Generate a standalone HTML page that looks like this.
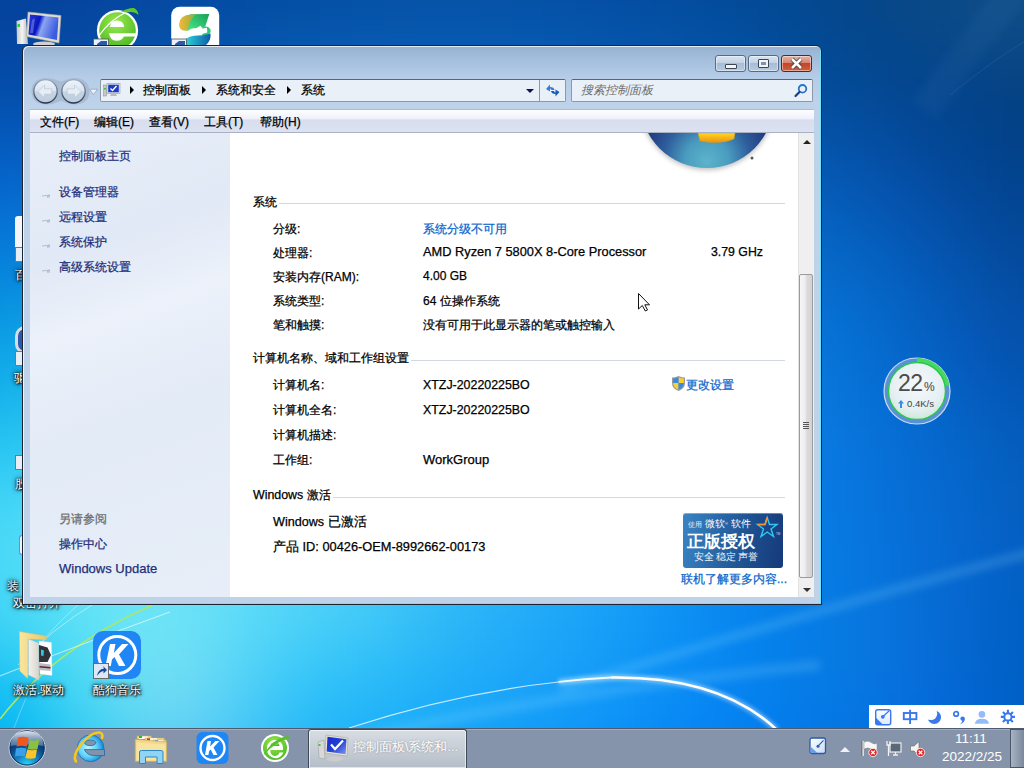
<!DOCTYPE html>
<html><head><meta charset="utf-8">
<style>
*{margin:0;padding:0;box-sizing:border-box}
html,body{width:1024px;height:768px;overflow:hidden}
body{position:relative;font-family:"Liberation Sans",sans-serif;font-size:12px;color:#000;background:#0a56b8}
.a{position:absolute}
.t{position:absolute;white-space:nowrap;line-height:16px}
.s{-webkit-text-stroke:.25px currentColor}
svg{position:absolute;overflow:visible}
.dl{position:absolute;white-space:nowrap;line-height:14px;color:#fff;font-size:12px;text-shadow:0 0 2px #000,1px 1px 2px #000,0 0 4px rgba(0,0,0,.8),0 0 6px rgba(0,0,0,.4)}
#win{left:22px;top:45px;width:800px;height:560px;border:1px solid #1b2430;border-radius:6px 6px 0 0;
background:linear-gradient(180deg,#97b2d1 0px,#a6c0de 16px,#b6cde7 32px,#bed3ea 60px,#bed3ea 100%);box-shadow:inset 1px 1px 0 rgba(255,255,255,.75), inset -1px -1px 0 rgba(100,230,255,.9)}
.tb{top:55px;width:31px;height:17px;border:1px solid #5a6b80;border-radius:3px;background:linear-gradient(180deg,#d9e4f0 0,#c3d3e5 45%,#a7bdd6 50%,#b7cbe1 100%);box-shadow:inset 0 0 0 1px rgba(255,255,255,.45)}
.box{background:#eaf0f8;border:1px solid #8d99a8;border-top-color:#5b6570;border-radius:2px}
#menu{left:30px;top:110px;width:784px;height:23px;background:linear-gradient(180deg,#fdfeff 0,#eef1f9 40%,#d8ddef 45%,#dde2f2 100%);border-bottom:1px solid #a9b1c4;box-shadow:0 -1px 0 #a8bcd4}
#lp{left:30px;top:133px;width:200px;height:464px;background:linear-gradient(160deg,#e8eff9 0%,#e1e9f6 25%,#ecf1fa 40%,#e3ebf7 60%,#e7eef8 100%)}
#ct{left:230px;top:133px;width:568px;height:464px;background:#fff}
#sb{left:798px;top:133px;width:16px;height:464px;background:#efefef;border-left:1px solid #e3e3e3}
.lk{color:#1e2f7a}
.bl{color:#0a66cc}
.hr{position:absolute;height:1px;background:#d4d9df}
#tk{left:0;top:728px;width:1024px;height:40px;background:#8594aa;border-top:1px solid #4d5a70;box-shadow:inset 0 1px 0 rgba(255,255,255,.25)}
</style></head>
<body>
<svg width="1024" height="768" style="left:0;top:0">
<defs>
<linearGradient id="g0" x1="0" y1="0" x2="0" y2="768" gradientUnits="userSpaceOnUse">
<stop offset="0" stop-color="#064ea8"/>
<stop offset="0.4" stop-color="#0658ba"/>
<stop offset="0.8" stop-color="#066ad4"/>
<stop offset="1" stop-color="#0a78e4"/>
</linearGradient>
<radialGradient id="g1">
<stop offset="0" stop-color="#74dcfa" stop-opacity="1"/>
<stop offset="0.3" stop-color="#48c6f4" stop-opacity="0.95"/>
<stop offset="0.65" stop-color="#1ea4ee" stop-opacity="0.6"/>
<stop offset="1" stop-color="#1590e6" stop-opacity="0"/>
</radialGradient>
<filter id="bl2" color-interpolation-filters="sRGB" x="-10%" y="-50%" width="120%" height="200%"><feGaussianBlur stdDeviation="2"/></filter>
<filter id="bl8" color-interpolation-filters="sRGB" x="-20%" y="-100%" width="140%" height="300%"><feGaussianBlur stdDeviation="4"/></filter>
</defs>
<filter id="bgb" color-interpolation-filters="sRGB" filterUnits="userSpaceOnUse" x="-100" y="-100" width="1224" height="968"><feGaussianBlur stdDeviation="18"/></filter>
<g filter="url(#bgb)">
<rect x="-64" y="-64" width="32" height="32" fill="#03419d"/>
<rect x="-32" y="-64" width="32" height="32" fill="#03419d"/>
<rect x="0" y="-64" width="32" height="32" fill="#04419d"/>
<rect x="32" y="-64" width="32" height="32" fill="#05439d"/>
<rect x="64" y="-64" width="32" height="32" fill="#05449e"/>
<rect x="96" y="-64" width="32" height="32" fill="#05459f"/>
<rect x="128" y="-64" width="32" height="32" fill="#0547a0"/>
<rect x="160" y="-64" width="32" height="32" fill="#0448a1"/>
<rect x="192" y="-64" width="32" height="32" fill="#044aa2"/>
<rect x="224" y="-64" width="32" height="32" fill="#044ba3"/>
<rect x="256" y="-64" width="32" height="32" fill="#044da4"/>
<rect x="288" y="-64" width="32" height="32" fill="#044ea5"/>
<rect x="320" y="-64" width="32" height="32" fill="#044fa6"/>
<rect x="352" y="-64" width="32" height="32" fill="#0450a7"/>
<rect x="384" y="-64" width="32" height="32" fill="#0551a7"/>
<rect x="416" y="-64" width="32" height="32" fill="#0551a8"/>
<rect x="448" y="-64" width="32" height="32" fill="#0551a8"/>
<rect x="480" y="-64" width="32" height="32" fill="#0551a7"/>
<rect x="512" y="-64" width="32" height="32" fill="#0550a7"/>
<rect x="544" y="-64" width="32" height="32" fill="#0450a6"/>
<rect x="576" y="-64" width="32" height="32" fill="#044fa4"/>
<rect x="608" y="-64" width="32" height="32" fill="#044ea3"/>
<rect x="640" y="-64" width="32" height="32" fill="#044da0"/>
<rect x="672" y="-64" width="32" height="32" fill="#034c9e"/>
<rect x="704" y="-64" width="32" height="32" fill="#034b9a"/>
<rect x="736" y="-64" width="32" height="32" fill="#044a97"/>
<rect x="768" y="-64" width="32" height="32" fill="#044993"/>
<rect x="800" y="-64" width="32" height="32" fill="#04488f"/>
<rect x="832" y="-64" width="32" height="32" fill="#05478b"/>
<rect x="864" y="-64" width="32" height="32" fill="#074789"/>
<rect x="896" y="-64" width="32" height="32" fill="#094888"/>
<rect x="928" y="-64" width="32" height="32" fill="#0b4a88"/>
<rect x="960" y="-64" width="32" height="32" fill="#0d4c88"/>
<rect x="992" y="-64" width="32" height="32" fill="#0f4d87"/>
<rect x="1024" y="-64" width="32" height="32" fill="#104c86"/>
<rect x="1056" y="-64" width="32" height="32" fill="#104c86"/>
<rect x="-64" y="-32" width="32" height="32" fill="#03419d"/>
<rect x="-32" y="-32" width="32" height="32" fill="#03419d"/>
<rect x="0" y="-32" width="32" height="32" fill="#04419d"/>
<rect x="32" y="-32" width="32" height="32" fill="#05439d"/>
<rect x="64" y="-32" width="32" height="32" fill="#05449e"/>
<rect x="96" y="-32" width="32" height="32" fill="#05459f"/>
<rect x="128" y="-32" width="32" height="32" fill="#0547a0"/>
<rect x="160" y="-32" width="32" height="32" fill="#0448a1"/>
<rect x="192" y="-32" width="32" height="32" fill="#044aa2"/>
<rect x="224" y="-32" width="32" height="32" fill="#044ba3"/>
<rect x="256" y="-32" width="32" height="32" fill="#044da4"/>
<rect x="288" y="-32" width="32" height="32" fill="#044ea5"/>
<rect x="320" y="-32" width="32" height="32" fill="#044fa6"/>
<rect x="352" y="-32" width="32" height="32" fill="#0450a7"/>
<rect x="384" y="-32" width="32" height="32" fill="#0551a7"/>
<rect x="416" y="-32" width="32" height="32" fill="#0551a8"/>
<rect x="448" y="-32" width="32" height="32" fill="#0551a8"/>
<rect x="480" y="-32" width="32" height="32" fill="#0551a7"/>
<rect x="512" y="-32" width="32" height="32" fill="#0550a7"/>
<rect x="544" y="-32" width="32" height="32" fill="#0450a6"/>
<rect x="576" y="-32" width="32" height="32" fill="#044fa4"/>
<rect x="608" y="-32" width="32" height="32" fill="#044ea3"/>
<rect x="640" y="-32" width="32" height="32" fill="#044da0"/>
<rect x="672" y="-32" width="32" height="32" fill="#034c9e"/>
<rect x="704" y="-32" width="32" height="32" fill="#034b9a"/>
<rect x="736" y="-32" width="32" height="32" fill="#044a97"/>
<rect x="768" y="-32" width="32" height="32" fill="#044993"/>
<rect x="800" y="-32" width="32" height="32" fill="#04488f"/>
<rect x="832" y="-32" width="32" height="32" fill="#05478b"/>
<rect x="864" y="-32" width="32" height="32" fill="#074789"/>
<rect x="896" y="-32" width="32" height="32" fill="#094888"/>
<rect x="928" y="-32" width="32" height="32" fill="#0b4a88"/>
<rect x="960" y="-32" width="32" height="32" fill="#0d4c88"/>
<rect x="992" y="-32" width="32" height="32" fill="#0f4d87"/>
<rect x="1024" y="-32" width="32" height="32" fill="#104c86"/>
<rect x="1056" y="-32" width="32" height="32" fill="#104c86"/>
<rect x="-64" y="0" width="32" height="32" fill="#03439f"/>
<rect x="-32" y="0" width="32" height="32" fill="#03439f"/>
<rect x="0" y="0" width="32" height="32" fill="#04449f"/>
<rect x="32" y="0" width="32" height="32" fill="#05459f"/>
<rect x="64" y="0" width="32" height="32" fill="#0546a0"/>
<rect x="96" y="0" width="32" height="32" fill="#0648a2"/>
<rect x="128" y="0" width="32" height="32" fill="#054aa3"/>
<rect x="160" y="0" width="32" height="32" fill="#054ba4"/>
<rect x="192" y="0" width="32" height="32" fill="#054da5"/>
<rect x="224" y="0" width="32" height="32" fill="#044ea6"/>
<rect x="256" y="0" width="32" height="32" fill="#0450a7"/>
<rect x="288" y="0" width="32" height="32" fill="#0551a8"/>
<rect x="320" y="0" width="32" height="32" fill="#0552a9"/>
<rect x="352" y="0" width="32" height="32" fill="#0553aa"/>
<rect x="384" y="0" width="32" height="32" fill="#0654aa"/>
<rect x="416" y="0" width="32" height="32" fill="#0654ab"/>
<rect x="448" y="0" width="32" height="32" fill="#0654ab"/>
<rect x="480" y="0" width="32" height="32" fill="#0654aa"/>
<rect x="512" y="0" width="32" height="32" fill="#0553aa"/>
<rect x="544" y="0" width="32" height="32" fill="#0552a9"/>
<rect x="576" y="0" width="32" height="32" fill="#0551a7"/>
<rect x="608" y="0" width="32" height="32" fill="#0450a6"/>
<rect x="640" y="0" width="32" height="32" fill="#044fa3"/>
<rect x="672" y="0" width="32" height="32" fill="#044ea0"/>
<rect x="704" y="0" width="32" height="32" fill="#034d9d"/>
<rect x="736" y="0" width="32" height="32" fill="#034c99"/>
<rect x="768" y="0" width="32" height="32" fill="#034a95"/>
<rect x="800" y="0" width="32" height="32" fill="#044991"/>
<rect x="832" y="0" width="32" height="32" fill="#05478c"/>
<rect x="864" y="0" width="32" height="32" fill="#06478a"/>
<rect x="896" y="0" width="32" height="32" fill="#084889"/>
<rect x="928" y="0" width="32" height="32" fill="#0a4988"/>
<rect x="960" y="0" width="32" height="32" fill="#0c4b88"/>
<rect x="992" y="0" width="32" height="32" fill="#0e4c87"/>
<rect x="1024" y="0" width="32" height="32" fill="#0f4b86"/>
<rect x="1056" y="0" width="32" height="32" fill="#0f4b86"/>
<rect x="-64" y="32" width="32" height="32" fill="#0347a3"/>
<rect x="-32" y="32" width="32" height="32" fill="#0347a3"/>
<rect x="0" y="32" width="32" height="32" fill="#0447a3"/>
<rect x="32" y="32" width="32" height="32" fill="#0549a4"/>
<rect x="64" y="32" width="32" height="32" fill="#064ba6"/>
<rect x="96" y="32" width="32" height="32" fill="#074da7"/>
<rect x="128" y="32" width="32" height="32" fill="#0750a9"/>
<rect x="160" y="32" width="32" height="32" fill="#0752aa"/>
<rect x="192" y="32" width="32" height="32" fill="#0753ac"/>
<rect x="224" y="32" width="32" height="32" fill="#0755ad"/>
<rect x="256" y="32" width="32" height="32" fill="#0757ae"/>
<rect x="288" y="32" width="32" height="32" fill="#0758af"/>
<rect x="320" y="32" width="32" height="32" fill="#0759af"/>
<rect x="352" y="32" width="32" height="32" fill="#085ab0"/>
<rect x="384" y="32" width="32" height="32" fill="#085ab1"/>
<rect x="416" y="32" width="32" height="32" fill="#085ab1"/>
<rect x="448" y="32" width="32" height="32" fill="#085ab1"/>
<rect x="480" y="32" width="32" height="32" fill="#075ab0"/>
<rect x="512" y="32" width="32" height="32" fill="#0759b0"/>
<rect x="544" y="32" width="32" height="32" fill="#0658af"/>
<rect x="576" y="32" width="32" height="32" fill="#0657ad"/>
<rect x="608" y="32" width="32" height="32" fill="#0555ac"/>
<rect x="640" y="32" width="32" height="32" fill="#0554a9"/>
<rect x="672" y="32" width="32" height="32" fill="#0452a6"/>
<rect x="704" y="32" width="32" height="32" fill="#0450a3"/>
<rect x="736" y="32" width="32" height="32" fill="#034e9f"/>
<rect x="768" y="32" width="32" height="32" fill="#034c9a"/>
<rect x="800" y="32" width="32" height="32" fill="#034a95"/>
<rect x="832" y="32" width="32" height="32" fill="#044890"/>
<rect x="864" y="32" width="32" height="32" fill="#04478c"/>
<rect x="896" y="32" width="32" height="32" fill="#06478b"/>
<rect x="928" y="32" width="32" height="32" fill="#074789"/>
<rect x="960" y="32" width="32" height="32" fill="#094888"/>
<rect x="992" y="32" width="32" height="32" fill="#0a4886"/>
<rect x="1024" y="32" width="32" height="32" fill="#0b4885"/>
<rect x="1056" y="32" width="32" height="32" fill="#0b4885"/>
<rect x="-64" y="64" width="32" height="32" fill="#034ba8"/>
<rect x="-32" y="64" width="32" height="32" fill="#034ba8"/>
<rect x="0" y="64" width="32" height="32" fill="#044ca8"/>
<rect x="32" y="64" width="32" height="32" fill="#064faa"/>
<rect x="64" y="64" width="32" height="32" fill="#0751ac"/>
<rect x="96" y="64" width="32" height="32" fill="#0854ae"/>
<rect x="128" y="64" width="32" height="32" fill="#0956b0"/>
<rect x="160" y="64" width="32" height="32" fill="#0959b1"/>
<rect x="192" y="64" width="32" height="32" fill="#095bb2"/>
<rect x="224" y="64" width="32" height="32" fill="#0a5db3"/>
<rect x="256" y="64" width="32" height="32" fill="#0a5eb4"/>
<rect x="288" y="64" width="32" height="32" fill="#0a5fb5"/>
<rect x="320" y="64" width="32" height="32" fill="#0a60b6"/>
<rect x="352" y="64" width="32" height="32" fill="#0b61b6"/>
<rect x="384" y="64" width="32" height="32" fill="#0b61b7"/>
<rect x="416" y="64" width="32" height="32" fill="#0a61b7"/>
<rect x="448" y="64" width="32" height="32" fill="#0a61b7"/>
<rect x="480" y="64" width="32" height="32" fill="#0a60b7"/>
<rect x="512" y="64" width="32" height="32" fill="#095fb6"/>
<rect x="544" y="64" width="32" height="32" fill="#085eb5"/>
<rect x="576" y="64" width="32" height="32" fill="#075cb4"/>
<rect x="608" y="64" width="32" height="32" fill="#065bb2"/>
<rect x="640" y="64" width="32" height="32" fill="#0659af"/>
<rect x="672" y="64" width="32" height="32" fill="#0557ac"/>
<rect x="704" y="64" width="32" height="32" fill="#0455a9"/>
<rect x="736" y="64" width="32" height="32" fill="#0452a5"/>
<rect x="768" y="64" width="32" height="32" fill="#034fa0"/>
<rect x="800" y="64" width="32" height="32" fill="#034c9b"/>
<rect x="832" y="64" width="32" height="32" fill="#034a95"/>
<rect x="864" y="64" width="32" height="32" fill="#044891"/>
<rect x="896" y="64" width="32" height="32" fill="#04468e"/>
<rect x="928" y="64" width="32" height="32" fill="#05458b"/>
<rect x="960" y="64" width="32" height="32" fill="#054488"/>
<rect x="992" y="64" width="32" height="32" fill="#064485"/>
<rect x="1024" y="64" width="32" height="32" fill="#074484"/>
<rect x="1056" y="64" width="32" height="32" fill="#074484"/>
<rect x="-64" y="96" width="32" height="32" fill="#0352b2"/>
<rect x="-32" y="96" width="32" height="32" fill="#0352b2"/>
<rect x="0" y="96" width="32" height="32" fill="#0453b2"/>
<rect x="32" y="96" width="32" height="32" fill="#0755b3"/>
<rect x="64" y="96" width="32" height="32" fill="#0958b5"/>
<rect x="96" y="96" width="32" height="32" fill="#0a5bb6"/>
<rect x="128" y="96" width="32" height="32" fill="#0b5eb7"/>
<rect x="160" y="96" width="32" height="32" fill="#0c61b8"/>
<rect x="192" y="96" width="32" height="32" fill="#0c63b9"/>
<rect x="224" y="96" width="32" height="32" fill="#0d65ba"/>
<rect x="256" y="96" width="32" height="32" fill="#0d66bb"/>
<rect x="288" y="96" width="32" height="32" fill="#0e68bc"/>
<rect x="320" y="96" width="32" height="32" fill="#0e68bc"/>
<rect x="352" y="96" width="32" height="32" fill="#0e69bd"/>
<rect x="384" y="96" width="32" height="32" fill="#0e69bd"/>
<rect x="416" y="96" width="32" height="32" fill="#0d69bd"/>
<rect x="448" y="96" width="32" height="32" fill="#0d68bd"/>
<rect x="480" y="96" width="32" height="32" fill="#0c67bd"/>
<rect x="512" y="96" width="32" height="32" fill="#0b66bc"/>
<rect x="544" y="96" width="32" height="32" fill="#0a64bb"/>
<rect x="576" y="96" width="32" height="32" fill="#0963ba"/>
<rect x="608" y="96" width="32" height="32" fill="#0861b8"/>
<rect x="640" y="96" width="32" height="32" fill="#075eb6"/>
<rect x="672" y="96" width="32" height="32" fill="#065cb3"/>
<rect x="704" y="96" width="32" height="32" fill="#0559b0"/>
<rect x="736" y="96" width="32" height="32" fill="#0457ac"/>
<rect x="768" y="96" width="32" height="32" fill="#0453a7"/>
<rect x="800" y="96" width="32" height="32" fill="#0450a2"/>
<rect x="832" y="96" width="32" height="32" fill="#044d9e"/>
<rect x="864" y="96" width="32" height="32" fill="#044a99"/>
<rect x="896" y="96" width="32" height="32" fill="#044794"/>
<rect x="928" y="96" width="32" height="32" fill="#03458f"/>
<rect x="960" y="96" width="32" height="32" fill="#03438a"/>
<rect x="992" y="96" width="32" height="32" fill="#034186"/>
<rect x="1024" y="96" width="32" height="32" fill="#044184"/>
<rect x="1056" y="96" width="32" height="32" fill="#044184"/>
<rect x="-64" y="128" width="32" height="32" fill="#045abe"/>
<rect x="-32" y="128" width="32" height="32" fill="#045abe"/>
<rect x="0" y="128" width="32" height="32" fill="#055bbe"/>
<rect x="32" y="128" width="32" height="32" fill="#085dbe"/>
<rect x="64" y="128" width="32" height="32" fill="#0a60be"/>
<rect x="96" y="128" width="32" height="32" fill="#0c64bf"/>
<rect x="128" y="128" width="32" height="32" fill="#0e67bf"/>
<rect x="160" y="128" width="32" height="32" fill="#0f69c0"/>
<rect x="192" y="128" width="32" height="32" fill="#106cc0"/>
<rect x="224" y="128" width="32" height="32" fill="#116ec1"/>
<rect x="256" y="128" width="32" height="32" fill="#116fc2"/>
<rect x="288" y="128" width="32" height="32" fill="#1270c2"/>
<rect x="320" y="128" width="32" height="32" fill="#1271c3"/>
<rect x="352" y="128" width="32" height="32" fill="#1271c3"/>
<rect x="384" y="128" width="32" height="32" fill="#1271c3"/>
<rect x="416" y="128" width="32" height="32" fill="#1170c3"/>
<rect x="448" y="128" width="32" height="32" fill="#1070c3"/>
<rect x="480" y="128" width="32" height="32" fill="#0f6ec3"/>
<rect x="512" y="128" width="32" height="32" fill="#0e6dc3"/>
<rect x="544" y="128" width="32" height="32" fill="#0d6bc2"/>
<rect x="576" y="128" width="32" height="32" fill="#0b69c0"/>
<rect x="608" y="128" width="32" height="32" fill="#0a67bf"/>
<rect x="640" y="128" width="32" height="32" fill="#0864bd"/>
<rect x="672" y="128" width="32" height="32" fill="#0762ba"/>
<rect x="704" y="128" width="32" height="32" fill="#065fb7"/>
<rect x="736" y="128" width="32" height="32" fill="#055cb4"/>
<rect x="768" y="128" width="32" height="32" fill="#0558b0"/>
<rect x="800" y="128" width="32" height="32" fill="#0455ab"/>
<rect x="832" y="128" width="32" height="32" fill="#0451a7"/>
<rect x="864" y="128" width="32" height="32" fill="#044ea2"/>
<rect x="896" y="128" width="32" height="32" fill="#044a9c"/>
<rect x="928" y="128" width="32" height="32" fill="#034795"/>
<rect x="960" y="128" width="32" height="32" fill="#02448f"/>
<rect x="992" y="128" width="32" height="32" fill="#03428a"/>
<rect x="1024" y="128" width="32" height="32" fill="#034188"/>
<rect x="1056" y="128" width="32" height="32" fill="#034188"/>
<rect x="-64" y="160" width="32" height="32" fill="#0462c9"/>
<rect x="-32" y="160" width="32" height="32" fill="#0462c9"/>
<rect x="0" y="160" width="32" height="32" fill="#0664c9"/>
<rect x="32" y="160" width="32" height="32" fill="#0967c9"/>
<rect x="64" y="160" width="32" height="32" fill="#0c6ac8"/>
<rect x="96" y="160" width="32" height="32" fill="#0e6dc7"/>
<rect x="128" y="160" width="32" height="32" fill="#1070c7"/>
<rect x="160" y="160" width="32" height="32" fill="#1273c7"/>
<rect x="192" y="160" width="32" height="32" fill="#1475c8"/>
<rect x="224" y="160" width="32" height="32" fill="#1577c8"/>
<rect x="256" y="160" width="32" height="32" fill="#1678c8"/>
<rect x="288" y="160" width="32" height="32" fill="#1679c9"/>
<rect x="320" y="160" width="32" height="32" fill="#167ac9"/>
<rect x="352" y="160" width="32" height="32" fill="#167ac9"/>
<rect x="384" y="160" width="32" height="32" fill="#1679c9"/>
<rect x="416" y="160" width="32" height="32" fill="#1579ca"/>
<rect x="448" y="160" width="32" height="32" fill="#1477c9"/>
<rect x="480" y="160" width="32" height="32" fill="#1276c9"/>
<rect x="512" y="160" width="32" height="32" fill="#1174c9"/>
<rect x="544" y="160" width="32" height="32" fill="#0f72c8"/>
<rect x="576" y="160" width="32" height="32" fill="#0d70c7"/>
<rect x="608" y="160" width="32" height="32" fill="#0c6dc5"/>
<rect x="640" y="160" width="32" height="32" fill="#0a6bc4"/>
<rect x="672" y="160" width="32" height="32" fill="#0968c1"/>
<rect x="704" y="160" width="32" height="32" fill="#0865bf"/>
<rect x="736" y="160" width="32" height="32" fill="#0661bc"/>
<rect x="768" y="160" width="32" height="32" fill="#065eb8"/>
<rect x="800" y="160" width="32" height="32" fill="#055ab4"/>
<rect x="832" y="160" width="32" height="32" fill="#0556b0"/>
<rect x="864" y="160" width="32" height="32" fill="#0552ab"/>
<rect x="896" y="160" width="32" height="32" fill="#044ea4"/>
<rect x="928" y="160" width="32" height="32" fill="#034a9d"/>
<rect x="960" y="160" width="32" height="32" fill="#034696"/>
<rect x="992" y="160" width="32" height="32" fill="#034490"/>
<rect x="1024" y="160" width="32" height="32" fill="#03438d"/>
<rect x="1056" y="160" width="32" height="32" fill="#03438d"/>
<rect x="-64" y="192" width="32" height="32" fill="#056cd2"/>
<rect x="-32" y="192" width="32" height="32" fill="#056cd2"/>
<rect x="0" y="192" width="32" height="32" fill="#076ed2"/>
<rect x="32" y="192" width="32" height="32" fill="#0a71d1"/>
<rect x="64" y="192" width="32" height="32" fill="#0e74d0"/>
<rect x="96" y="192" width="32" height="32" fill="#1178cf"/>
<rect x="128" y="192" width="32" height="32" fill="#147bcf"/>
<rect x="160" y="192" width="32" height="32" fill="#167dcf"/>
<rect x="192" y="192" width="32" height="32" fill="#187fcf"/>
<rect x="224" y="192" width="32" height="32" fill="#1a81cf"/>
<rect x="256" y="192" width="32" height="32" fill="#1b82cf"/>
<rect x="288" y="192" width="32" height="32" fill="#1b83cf"/>
<rect x="320" y="192" width="32" height="32" fill="#1b83cf"/>
<rect x="352" y="192" width="32" height="32" fill="#1b83cf"/>
<rect x="384" y="192" width="32" height="32" fill="#1a82cf"/>
<rect x="416" y="192" width="32" height="32" fill="#1981cf"/>
<rect x="448" y="192" width="32" height="32" fill="#177fcf"/>
<rect x="480" y="192" width="32" height="32" fill="#167dcf"/>
<rect x="512" y="192" width="32" height="32" fill="#147bcf"/>
<rect x="544" y="192" width="32" height="32" fill="#1279ce"/>
<rect x="576" y="192" width="32" height="32" fill="#1076cd"/>
<rect x="608" y="192" width="32" height="32" fill="#0e74cc"/>
<rect x="640" y="192" width="32" height="32" fill="#0c71ca"/>
<rect x="672" y="192" width="32" height="32" fill="#0a6ec9"/>
<rect x="704" y="192" width="32" height="32" fill="#096bc6"/>
<rect x="736" y="192" width="32" height="32" fill="#0867c4"/>
<rect x="768" y="192" width="32" height="32" fill="#0664c0"/>
<rect x="800" y="192" width="32" height="32" fill="#0660bd"/>
<rect x="832" y="192" width="32" height="32" fill="#055cb8"/>
<rect x="864" y="192" width="32" height="32" fill="#0557b3"/>
<rect x="896" y="192" width="32" height="32" fill="#0452ac"/>
<rect x="928" y="192" width="32" height="32" fill="#044ea4"/>
<rect x="960" y="192" width="32" height="32" fill="#034a9d"/>
<rect x="992" y="192" width="32" height="32" fill="#034696"/>
<rect x="1024" y="192" width="32" height="32" fill="#034593"/>
<rect x="1056" y="192" width="32" height="32" fill="#034593"/>
<rect x="-64" y="224" width="32" height="32" fill="#0578d7"/>
<rect x="-32" y="224" width="32" height="32" fill="#0578d7"/>
<rect x="0" y="224" width="32" height="32" fill="#0779d8"/>
<rect x="32" y="224" width="32" height="32" fill="#0b7dd7"/>
<rect x="64" y="224" width="32" height="32" fill="#1080d7"/>
<rect x="96" y="224" width="32" height="32" fill="#1483d6"/>
<rect x="128" y="224" width="32" height="32" fill="#1786d6"/>
<rect x="160" y="224" width="32" height="32" fill="#1b88d5"/>
<rect x="192" y="224" width="32" height="32" fill="#1d8ad5"/>
<rect x="224" y="224" width="32" height="32" fill="#1f8cd5"/>
<rect x="256" y="224" width="32" height="32" fill="#208cd5"/>
<rect x="288" y="224" width="32" height="32" fill="#218dd5"/>
<rect x="320" y="224" width="32" height="32" fill="#208cd5"/>
<rect x="352" y="224" width="32" height="32" fill="#208cd5"/>
<rect x="384" y="224" width="32" height="32" fill="#1f8bd5"/>
<rect x="416" y="224" width="32" height="32" fill="#1d89d5"/>
<rect x="448" y="224" width="32" height="32" fill="#1b87d5"/>
<rect x="480" y="224" width="32" height="32" fill="#1985d5"/>
<rect x="512" y="224" width="32" height="32" fill="#1783d5"/>
<rect x="544" y="224" width="32" height="32" fill="#1580d4"/>
<rect x="576" y="224" width="32" height="32" fill="#127dd3"/>
<rect x="608" y="224" width="32" height="32" fill="#107ad2"/>
<rect x="640" y="224" width="32" height="32" fill="#0e77d1"/>
<rect x="672" y="224" width="32" height="32" fill="#0c74cf"/>
<rect x="704" y="224" width="32" height="32" fill="#0a70cd"/>
<rect x="736" y="224" width="32" height="32" fill="#086dcb"/>
<rect x="768" y="224" width="32" height="32" fill="#076ac8"/>
<rect x="800" y="224" width="32" height="32" fill="#0666c5"/>
<rect x="832" y="224" width="32" height="32" fill="#0561c0"/>
<rect x="864" y="224" width="32" height="32" fill="#055dba"/>
<rect x="896" y="224" width="32" height="32" fill="#0457b3"/>
<rect x="928" y="224" width="32" height="32" fill="#0452ab"/>
<rect x="960" y="224" width="32" height="32" fill="#044da3"/>
<rect x="992" y="224" width="32" height="32" fill="#04499c"/>
<rect x="1024" y="224" width="32" height="32" fill="#044899"/>
<rect x="1056" y="224" width="32" height="32" fill="#044899"/>
<rect x="-64" y="256" width="32" height="32" fill="#0584dc"/>
<rect x="-32" y="256" width="32" height="32" fill="#0584dc"/>
<rect x="0" y="256" width="32" height="32" fill="#0786dc"/>
<rect x="32" y="256" width="32" height="32" fill="#0d89dd"/>
<rect x="64" y="256" width="32" height="32" fill="#128cdc"/>
<rect x="96" y="256" width="32" height="32" fill="#178fdc"/>
<rect x="128" y="256" width="32" height="32" fill="#1c92dc"/>
<rect x="160" y="256" width="32" height="32" fill="#2094db"/>
<rect x="192" y="256" width="32" height="32" fill="#2395db"/>
<rect x="224" y="256" width="32" height="32" fill="#2596db"/>
<rect x="256" y="256" width="32" height="32" fill="#2697db"/>
<rect x="288" y="256" width="32" height="32" fill="#2697db"/>
<rect x="320" y="256" width="32" height="32" fill="#2696db"/>
<rect x="352" y="256" width="32" height="32" fill="#2595db"/>
<rect x="384" y="256" width="32" height="32" fill="#2493db"/>
<rect x="416" y="256" width="32" height="32" fill="#2291db"/>
<rect x="448" y="256" width="32" height="32" fill="#1f8fdb"/>
<rect x="480" y="256" width="32" height="32" fill="#1d8dda"/>
<rect x="512" y="256" width="32" height="32" fill="#1a8ada"/>
<rect x="544" y="256" width="32" height="32" fill="#1887da"/>
<rect x="576" y="256" width="32" height="32" fill="#1584d9"/>
<rect x="608" y="256" width="32" height="32" fill="#1280d8"/>
<rect x="640" y="256" width="32" height="32" fill="#107dd7"/>
<rect x="672" y="256" width="32" height="32" fill="#0d7ad6"/>
<rect x="704" y="256" width="32" height="32" fill="#0b76d4"/>
<rect x="736" y="256" width="32" height="32" fill="#0973d2"/>
<rect x="768" y="256" width="32" height="32" fill="#086fcf"/>
<rect x="800" y="256" width="32" height="32" fill="#076bcc"/>
<rect x="832" y="256" width="32" height="32" fill="#0667c8"/>
<rect x="864" y="256" width="32" height="32" fill="#0562c2"/>
<rect x="896" y="256" width="32" height="32" fill="#055cba"/>
<rect x="928" y="256" width="32" height="32" fill="#0456b2"/>
<rect x="960" y="256" width="32" height="32" fill="#0451aa"/>
<rect x="992" y="256" width="32" height="32" fill="#044da2"/>
<rect x="1024" y="256" width="32" height="32" fill="#044b9f"/>
<rect x="1056" y="256" width="32" height="32" fill="#044b9f"/>
<rect x="-64" y="288" width="32" height="32" fill="#0791e0"/>
<rect x="-32" y="288" width="32" height="32" fill="#0791e0"/>
<rect x="0" y="288" width="32" height="32" fill="#0993e0"/>
<rect x="32" y="288" width="32" height="32" fill="#1096e1"/>
<rect x="64" y="288" width="32" height="32" fill="#1699e1"/>
<rect x="96" y="288" width="32" height="32" fill="#1c9be1"/>
<rect x="128" y="288" width="32" height="32" fill="#219ee1"/>
<rect x="160" y="288" width="32" height="32" fill="#269fe1"/>
<rect x="192" y="288" width="32" height="32" fill="#29a0e0"/>
<rect x="224" y="288" width="32" height="32" fill="#2ba1e0"/>
<rect x="256" y="288" width="32" height="32" fill="#2ca1e0"/>
<rect x="288" y="288" width="32" height="32" fill="#2ca0e0"/>
<rect x="320" y="288" width="32" height="32" fill="#2c9fe0"/>
<rect x="352" y="288" width="32" height="32" fill="#2a9ee0"/>
<rect x="384" y="288" width="32" height="32" fill="#299ce0"/>
<rect x="416" y="288" width="32" height="32" fill="#2699e0"/>
<rect x="448" y="288" width="32" height="32" fill="#2497e0"/>
<rect x="480" y="288" width="32" height="32" fill="#2194df"/>
<rect x="512" y="288" width="32" height="32" fill="#1d91df"/>
<rect x="544" y="288" width="32" height="32" fill="#1a8ddf"/>
<rect x="576" y="288" width="32" height="32" fill="#178ade"/>
<rect x="608" y="288" width="32" height="32" fill="#1486de"/>
<rect x="640" y="288" width="32" height="32" fill="#1182dd"/>
<rect x="672" y="288" width="32" height="32" fill="#0f7fdb"/>
<rect x="704" y="288" width="32" height="32" fill="#0c7bda"/>
<rect x="736" y="288" width="32" height="32" fill="#0a77d8"/>
<rect x="768" y="288" width="32" height="32" fill="#0874d5"/>
<rect x="800" y="288" width="32" height="32" fill="#0770d2"/>
<rect x="832" y="288" width="32" height="32" fill="#066cce"/>
<rect x="864" y="288" width="32" height="32" fill="#0566c8"/>
<rect x="896" y="288" width="32" height="32" fill="#0560c0"/>
<rect x="928" y="288" width="32" height="32" fill="#055ab8"/>
<rect x="960" y="288" width="32" height="32" fill="#0554b0"/>
<rect x="992" y="288" width="32" height="32" fill="#0550a8"/>
<rect x="1024" y="288" width="32" height="32" fill="#044ea5"/>
<rect x="1056" y="288" width="32" height="32" fill="#044ea5"/>
<rect x="-64" y="320" width="32" height="32" fill="#0a9de4"/>
<rect x="-32" y="320" width="32" height="32" fill="#0a9de4"/>
<rect x="0" y="320" width="32" height="32" fill="#0d9fe5"/>
<rect x="32" y="320" width="32" height="32" fill="#14a2e5"/>
<rect x="64" y="320" width="32" height="32" fill="#1ca5e6"/>
<rect x="96" y="320" width="32" height="32" fill="#22a8e6"/>
<rect x="128" y="320" width="32" height="32" fill="#28a9e6"/>
<rect x="160" y="320" width="32" height="32" fill="#2dabe5"/>
<rect x="192" y="320" width="32" height="32" fill="#30abe5"/>
<rect x="224" y="320" width="32" height="32" fill="#32ace5"/>
<rect x="256" y="320" width="32" height="32" fill="#33abe5"/>
<rect x="288" y="320" width="32" height="32" fill="#33aae4"/>
<rect x="320" y="320" width="32" height="32" fill="#32a8e4"/>
<rect x="352" y="320" width="32" height="32" fill="#30a6e4"/>
<rect x="384" y="320" width="32" height="32" fill="#2ea4e4"/>
<rect x="416" y="320" width="32" height="32" fill="#2ba1e4"/>
<rect x="448" y="320" width="32" height="32" fill="#289ee4"/>
<rect x="480" y="320" width="32" height="32" fill="#249be4"/>
<rect x="512" y="320" width="32" height="32" fill="#2197e4"/>
<rect x="544" y="320" width="32" height="32" fill="#1d93e4"/>
<rect x="576" y="320" width="32" height="32" fill="#198fe3"/>
<rect x="608" y="320" width="32" height="32" fill="#168be2"/>
<rect x="640" y="320" width="32" height="32" fill="#1387e2"/>
<rect x="672" y="320" width="32" height="32" fill="#1083e0"/>
<rect x="704" y="320" width="32" height="32" fill="#0d80df"/>
<rect x="736" y="320" width="32" height="32" fill="#0b7cdd"/>
<rect x="768" y="320" width="32" height="32" fill="#0978da"/>
<rect x="800" y="320" width="32" height="32" fill="#0874d7"/>
<rect x="832" y="320" width="32" height="32" fill="#066fd3"/>
<rect x="864" y="320" width="32" height="32" fill="#066acd"/>
<rect x="896" y="320" width="32" height="32" fill="#0563c6"/>
<rect x="928" y="320" width="32" height="32" fill="#055dbe"/>
<rect x="960" y="320" width="32" height="32" fill="#0557b6"/>
<rect x="992" y="320" width="32" height="32" fill="#0552ae"/>
<rect x="1024" y="320" width="32" height="32" fill="#0450ab"/>
<rect x="1056" y="320" width="32" height="32" fill="#0450ab"/>
<rect x="-64" y="352" width="32" height="32" fill="#0fa9e9"/>
<rect x="-32" y="352" width="32" height="32" fill="#0fa9e9"/>
<rect x="0" y="352" width="32" height="32" fill="#13abe9"/>
<rect x="32" y="352" width="32" height="32" fill="#1baee9"/>
<rect x="64" y="352" width="32" height="32" fill="#23b1ea"/>
<rect x="96" y="352" width="32" height="32" fill="#2ab3ea"/>
<rect x="128" y="352" width="32" height="32" fill="#30b5ea"/>
<rect x="160" y="352" width="32" height="32" fill="#34b6ea"/>
<rect x="192" y="352" width="32" height="32" fill="#38b6e9"/>
<rect x="224" y="352" width="32" height="32" fill="#39b6e9"/>
<rect x="256" y="352" width="32" height="32" fill="#3ab5e9"/>
<rect x="288" y="352" width="32" height="32" fill="#39b3e9"/>
<rect x="320" y="352" width="32" height="32" fill="#38b1e9"/>
<rect x="352" y="352" width="32" height="32" fill="#35afe8"/>
<rect x="384" y="352" width="32" height="32" fill="#32ace8"/>
<rect x="416" y="352" width="32" height="32" fill="#2fa8e8"/>
<rect x="448" y="352" width="32" height="32" fill="#2ba5e8"/>
<rect x="480" y="352" width="32" height="32" fill="#27a1e8"/>
<rect x="512" y="352" width="32" height="32" fill="#239de8"/>
<rect x="544" y="352" width="32" height="32" fill="#1f99e8"/>
<rect x="576" y="352" width="32" height="32" fill="#1b94e7"/>
<rect x="608" y="352" width="32" height="32" fill="#1890e7"/>
<rect x="640" y="352" width="32" height="32" fill="#148ce6"/>
<rect x="672" y="352" width="32" height="32" fill="#1187e5"/>
<rect x="704" y="352" width="32" height="32" fill="#0e83e3"/>
<rect x="736" y="352" width="32" height="32" fill="#0c7fe1"/>
<rect x="768" y="352" width="32" height="32" fill="#0a7bde"/>
<rect x="800" y="352" width="32" height="32" fill="#0876db"/>
<rect x="832" y="352" width="32" height="32" fill="#0771d6"/>
<rect x="864" y="352" width="32" height="32" fill="#066cd1"/>
<rect x="896" y="352" width="32" height="32" fill="#0566ca"/>
<rect x="928" y="352" width="32" height="32" fill="#0560c3"/>
<rect x="960" y="352" width="32" height="32" fill="#055abb"/>
<rect x="992" y="352" width="32" height="32" fill="#0455b4"/>
<rect x="1024" y="352" width="32" height="32" fill="#0453b0"/>
<rect x="1056" y="352" width="32" height="32" fill="#0453b0"/>
<rect x="-64" y="384" width="32" height="32" fill="#16b4ec"/>
<rect x="-32" y="384" width="32" height="32" fill="#16b4ec"/>
<rect x="0" y="384" width="32" height="32" fill="#1ab6ed"/>
<rect x="32" y="384" width="32" height="32" fill="#23baed"/>
<rect x="64" y="384" width="32" height="32" fill="#2cbded"/>
<rect x="96" y="384" width="32" height="32" fill="#33bfee"/>
<rect x="128" y="384" width="32" height="32" fill="#39c0ed"/>
<rect x="160" y="384" width="32" height="32" fill="#3dc1ed"/>
<rect x="192" y="384" width="32" height="32" fill="#40c0ed"/>
<rect x="224" y="384" width="32" height="32" fill="#41bfed"/>
<rect x="256" y="384" width="32" height="32" fill="#41beec"/>
<rect x="288" y="384" width="32" height="32" fill="#40bcec"/>
<rect x="320" y="384" width="32" height="32" fill="#3db9ec"/>
<rect x="352" y="384" width="32" height="32" fill="#3ab6ec"/>
<rect x="384" y="384" width="32" height="32" fill="#37b3ec"/>
<rect x="416" y="384" width="32" height="32" fill="#33afec"/>
<rect x="448" y="384" width="32" height="32" fill="#2fabec"/>
<rect x="480" y="384" width="32" height="32" fill="#2aa6ec"/>
<rect x="512" y="384" width="32" height="32" fill="#26a2ec"/>
<rect x="544" y="384" width="32" height="32" fill="#219deb"/>
<rect x="576" y="384" width="32" height="32" fill="#1d99eb"/>
<rect x="608" y="384" width="32" height="32" fill="#1994ea"/>
<rect x="640" y="384" width="32" height="32" fill="#158fe9"/>
<rect x="672" y="384" width="32" height="32" fill="#128be8"/>
<rect x="704" y="384" width="32" height="32" fill="#0f86e6"/>
<rect x="736" y="384" width="32" height="32" fill="#0c82e4"/>
<rect x="768" y="384" width="32" height="32" fill="#0a7de1"/>
<rect x="800" y="384" width="32" height="32" fill="#0878de"/>
<rect x="832" y="384" width="32" height="32" fill="#0773d9"/>
<rect x="864" y="384" width="32" height="32" fill="#066ed4"/>
<rect x="896" y="384" width="32" height="32" fill="#0669ce"/>
<rect x="928" y="384" width="32" height="32" fill="#0563c7"/>
<rect x="960" y="384" width="32" height="32" fill="#055ec0"/>
<rect x="992" y="384" width="32" height="32" fill="#0459b8"/>
<rect x="1024" y="384" width="32" height="32" fill="#0457b5"/>
<rect x="1056" y="384" width="32" height="32" fill="#0457b5"/>
<rect x="-64" y="416" width="32" height="32" fill="#20bef0"/>
<rect x="-32" y="416" width="32" height="32" fill="#20bef0"/>
<rect x="0" y="416" width="32" height="32" fill="#24c1f0"/>
<rect x="32" y="416" width="32" height="32" fill="#2ec5f1"/>
<rect x="64" y="416" width="32" height="32" fill="#37c8f1"/>
<rect x="96" y="416" width="32" height="32" fill="#3ec9f1"/>
<rect x="128" y="416" width="32" height="32" fill="#43caf1"/>
<rect x="160" y="416" width="32" height="32" fill="#47caf0"/>
<rect x="192" y="416" width="32" height="32" fill="#48c9f0"/>
<rect x="224" y="416" width="32" height="32" fill="#49c8f0"/>
<rect x="256" y="416" width="32" height="32" fill="#48c6f0"/>
<rect x="288" y="416" width="32" height="32" fill="#46c3ef"/>
<rect x="320" y="416" width="32" height="32" fill="#43c0ef"/>
<rect x="352" y="416" width="32" height="32" fill="#3fbdef"/>
<rect x="384" y="416" width="32" height="32" fill="#3bb9ef"/>
<rect x="416" y="416" width="32" height="32" fill="#36b4ef"/>
<rect x="448" y="416" width="32" height="32" fill="#31b0ef"/>
<rect x="480" y="416" width="32" height="32" fill="#2cabef"/>
<rect x="512" y="416" width="32" height="32" fill="#27a6ef"/>
<rect x="544" y="416" width="32" height="32" fill="#23a2ef"/>
<rect x="576" y="416" width="32" height="32" fill="#1e9dee"/>
<rect x="608" y="416" width="32" height="32" fill="#1a98ed"/>
<rect x="640" y="416" width="32" height="32" fill="#1592ec"/>
<rect x="672" y="416" width="32" height="32" fill="#128deb"/>
<rect x="704" y="416" width="32" height="32" fill="#0f88e9"/>
<rect x="736" y="416" width="32" height="32" fill="#0c83e7"/>
<rect x="768" y="416" width="32" height="32" fill="#0a7ee4"/>
<rect x="800" y="416" width="32" height="32" fill="#097ae0"/>
<rect x="832" y="416" width="32" height="32" fill="#0875dc"/>
<rect x="864" y="416" width="32" height="32" fill="#0770d7"/>
<rect x="896" y="416" width="32" height="32" fill="#066bd1"/>
<rect x="928" y="416" width="32" height="32" fill="#0566ca"/>
<rect x="960" y="416" width="32" height="32" fill="#0561c3"/>
<rect x="992" y="416" width="32" height="32" fill="#045dbc"/>
<rect x="1024" y="416" width="32" height="32" fill="#045ab9"/>
<rect x="1056" y="416" width="32" height="32" fill="#045ab9"/>
<rect x="-64" y="448" width="32" height="32" fill="#2dc8f3"/>
<rect x="-32" y="448" width="32" height="32" fill="#2dc8f3"/>
<rect x="0" y="448" width="32" height="32" fill="#32cbf4"/>
<rect x="32" y="448" width="32" height="32" fill="#3bcff4"/>
<rect x="64" y="448" width="32" height="32" fill="#43d1f4"/>
<rect x="96" y="448" width="32" height="32" fill="#49d3f3"/>
<rect x="128" y="448" width="32" height="32" fill="#4ed3f3"/>
<rect x="160" y="448" width="32" height="32" fill="#50d3f3"/>
<rect x="192" y="448" width="32" height="32" fill="#51d1f3"/>
<rect x="224" y="448" width="32" height="32" fill="#50cff2"/>
<rect x="256" y="448" width="32" height="32" fill="#4ecdf2"/>
<rect x="288" y="448" width="32" height="32" fill="#4bcaf2"/>
<rect x="320" y="448" width="32" height="32" fill="#47c6f2"/>
<rect x="352" y="448" width="32" height="32" fill="#43c2f2"/>
<rect x="384" y="448" width="32" height="32" fill="#3ebef2"/>
<rect x="416" y="448" width="32" height="32" fill="#39b9f2"/>
<rect x="448" y="448" width="32" height="32" fill="#33b4f2"/>
<rect x="480" y="448" width="32" height="32" fill="#2eaff2"/>
<rect x="512" y="448" width="32" height="32" fill="#29aaf1"/>
<rect x="544" y="448" width="32" height="32" fill="#23a5f1"/>
<rect x="576" y="448" width="32" height="32" fill="#1e9ff1"/>
<rect x="608" y="448" width="32" height="32" fill="#1a9af0"/>
<rect x="640" y="448" width="32" height="32" fill="#1695ef"/>
<rect x="672" y="448" width="32" height="32" fill="#128fed"/>
<rect x="704" y="448" width="32" height="32" fill="#0f8aeb"/>
<rect x="736" y="448" width="32" height="32" fill="#0c85e9"/>
<rect x="768" y="448" width="32" height="32" fill="#0a80e6"/>
<rect x="800" y="448" width="32" height="32" fill="#097ae2"/>
<rect x="832" y="448" width="32" height="32" fill="#0875de"/>
<rect x="864" y="448" width="32" height="32" fill="#0771d9"/>
<rect x="896" y="448" width="32" height="32" fill="#066cd3"/>
<rect x="928" y="448" width="32" height="32" fill="#0668cd"/>
<rect x="960" y="448" width="32" height="32" fill="#0563c6"/>
<rect x="992" y="448" width="32" height="32" fill="#045fbf"/>
<rect x="1024" y="448" width="32" height="32" fill="#045dbc"/>
<rect x="1056" y="448" width="32" height="32" fill="#045dbc"/>
<rect x="-64" y="480" width="32" height="32" fill="#3bd1f6"/>
<rect x="-32" y="480" width="32" height="32" fill="#3bd1f6"/>
<rect x="0" y="480" width="32" height="32" fill="#40d3f6"/>
<rect x="32" y="480" width="32" height="32" fill="#49d7f6"/>
<rect x="64" y="480" width="32" height="32" fill="#4fd9f6"/>
<rect x="96" y="480" width="32" height="32" fill="#54daf5"/>
<rect x="128" y="480" width="32" height="32" fill="#58dbf5"/>
<rect x="160" y="480" width="32" height="32" fill="#59daf5"/>
<rect x="192" y="480" width="32" height="32" fill="#58d8f5"/>
<rect x="224" y="480" width="32" height="32" fill="#56d5f4"/>
<rect x="256" y="480" width="32" height="32" fill="#53d2f4"/>
<rect x="288" y="480" width="32" height="32" fill="#4fcff4"/>
<rect x="320" y="480" width="32" height="32" fill="#4bcbf4"/>
<rect x="352" y="480" width="32" height="32" fill="#46c6f4"/>
<rect x="384" y="480" width="32" height="32" fill="#40c2f4"/>
<rect x="416" y="480" width="32" height="32" fill="#3abcf4"/>
<rect x="448" y="480" width="32" height="32" fill="#34b7f4"/>
<rect x="480" y="480" width="32" height="32" fill="#2fb2f4"/>
<rect x="512" y="480" width="32" height="32" fill="#29acf4"/>
<rect x="544" y="480" width="32" height="32" fill="#24a7f3"/>
<rect x="576" y="480" width="32" height="32" fill="#1ea2f3"/>
<rect x="608" y="480" width="32" height="32" fill="#1a9cf2"/>
<rect x="640" y="480" width="32" height="32" fill="#1596f1"/>
<rect x="672" y="480" width="32" height="32" fill="#1191ef"/>
<rect x="704" y="480" width="32" height="32" fill="#0e8bed"/>
<rect x="736" y="480" width="32" height="32" fill="#0b86ea"/>
<rect x="768" y="480" width="32" height="32" fill="#0a80e7"/>
<rect x="800" y="480" width="32" height="32" fill="#087be3"/>
<rect x="832" y="480" width="32" height="32" fill="#0876df"/>
<rect x="864" y="480" width="32" height="32" fill="#0772da"/>
<rect x="896" y="480" width="32" height="32" fill="#076dd5"/>
<rect x="928" y="480" width="32" height="32" fill="#0669cf"/>
<rect x="960" y="480" width="32" height="32" fill="#0564c9"/>
<rect x="992" y="480" width="32" height="32" fill="#0560c2"/>
<rect x="1024" y="480" width="32" height="32" fill="#045ebf"/>
<rect x="1056" y="480" width="32" height="32" fill="#045ebf"/>
<rect x="-64" y="512" width="32" height="32" fill="#45d6f7"/>
<rect x="-32" y="512" width="32" height="32" fill="#45d6f7"/>
<rect x="0" y="512" width="32" height="32" fill="#4bd9f8"/>
<rect x="32" y="512" width="32" height="32" fill="#53ddf7"/>
<rect x="64" y="512" width="32" height="32" fill="#59dff7"/>
<rect x="96" y="512" width="32" height="32" fill="#5ee0f7"/>
<rect x="128" y="512" width="32" height="32" fill="#60e0f6"/>
<rect x="160" y="512" width="32" height="32" fill="#60dff6"/>
<rect x="192" y="512" width="32" height="32" fill="#5fddf6"/>
<rect x="224" y="512" width="32" height="32" fill="#5bdaf6"/>
<rect x="256" y="512" width="32" height="32" fill="#57d6f6"/>
<rect x="288" y="512" width="32" height="32" fill="#52d2f6"/>
<rect x="320" y="512" width="32" height="32" fill="#4dcef6"/>
<rect x="352" y="512" width="32" height="32" fill="#47c9f5"/>
<rect x="384" y="512" width="32" height="32" fill="#41c4f5"/>
<rect x="416" y="512" width="32" height="32" fill="#3bbef5"/>
<rect x="448" y="512" width="32" height="32" fill="#34b9f5"/>
<rect x="480" y="512" width="32" height="32" fill="#2eb3f5"/>
<rect x="512" y="512" width="32" height="32" fill="#28aef5"/>
<rect x="544" y="512" width="32" height="32" fill="#23a8f5"/>
<rect x="576" y="512" width="32" height="32" fill="#1ea3f5"/>
<rect x="608" y="512" width="32" height="32" fill="#199df4"/>
<rect x="640" y="512" width="32" height="32" fill="#1497f2"/>
<rect x="672" y="512" width="32" height="32" fill="#1091f1"/>
<rect x="704" y="512" width="32" height="32" fill="#0d8bee"/>
<rect x="736" y="512" width="32" height="32" fill="#0b86eb"/>
<rect x="768" y="512" width="32" height="32" fill="#0981e8"/>
<rect x="800" y="512" width="32" height="32" fill="#087ce4"/>
<rect x="832" y="512" width="32" height="32" fill="#0877e0"/>
<rect x="864" y="512" width="32" height="32" fill="#0772db"/>
<rect x="896" y="512" width="32" height="32" fill="#076ed6"/>
<rect x="928" y="512" width="32" height="32" fill="#0669d1"/>
<rect x="960" y="512" width="32" height="32" fill="#0665cb"/>
<rect x="992" y="512" width="32" height="32" fill="#0560c4"/>
<rect x="1024" y="512" width="32" height="32" fill="#045ec1"/>
<rect x="1056" y="512" width="32" height="32" fill="#045ec1"/>
<rect x="-64" y="544" width="32" height="32" fill="#47d7f7"/>
<rect x="-32" y="544" width="32" height="32" fill="#47d7f7"/>
<rect x="0" y="544" width="32" height="32" fill="#4ddbf7"/>
<rect x="32" y="544" width="32" height="32" fill="#57dff7"/>
<rect x="64" y="544" width="32" height="32" fill="#5fe2f7"/>
<rect x="96" y="544" width="32" height="32" fill="#64e3f7"/>
<rect x="128" y="544" width="32" height="32" fill="#67e3f7"/>
<rect x="160" y="544" width="32" height="32" fill="#66e2f7"/>
<rect x="192" y="544" width="32" height="32" fill="#63dff7"/>
<rect x="224" y="544" width="32" height="32" fill="#5edcf7"/>
<rect x="256" y="544" width="32" height="32" fill="#58d8f7"/>
<rect x="288" y="544" width="32" height="32" fill="#52d4f7"/>
<rect x="320" y="544" width="32" height="32" fill="#4dd0f7"/>
<rect x="352" y="544" width="32" height="32" fill="#47cbf6"/>
<rect x="384" y="544" width="32" height="32" fill="#40c5f6"/>
<rect x="416" y="544" width="32" height="32" fill="#39bff6"/>
<rect x="448" y="544" width="32" height="32" fill="#33b9f6"/>
<rect x="480" y="544" width="32" height="32" fill="#2db3f6"/>
<rect x="512" y="544" width="32" height="32" fill="#27aef6"/>
<rect x="544" y="544" width="32" height="32" fill="#22a9f6"/>
<rect x="576" y="544" width="32" height="32" fill="#1da3f6"/>
<rect x="608" y="544" width="32" height="32" fill="#189df5"/>
<rect x="640" y="544" width="32" height="32" fill="#1397f4"/>
<rect x="672" y="544" width="32" height="32" fill="#0f91f2"/>
<rect x="704" y="544" width="32" height="32" fill="#0c8bef"/>
<rect x="736" y="544" width="32" height="32" fill="#0986ec"/>
<rect x="768" y="544" width="32" height="32" fill="#0881e9"/>
<rect x="800" y="544" width="32" height="32" fill="#077ce5"/>
<rect x="832" y="544" width="32" height="32" fill="#0778e0"/>
<rect x="864" y="544" width="32" height="32" fill="#0773dc"/>
<rect x="896" y="544" width="32" height="32" fill="#076ed7"/>
<rect x="928" y="544" width="32" height="32" fill="#066ad2"/>
<rect x="960" y="544" width="32" height="32" fill="#0565cc"/>
<rect x="992" y="544" width="32" height="32" fill="#0460c6"/>
<rect x="1024" y="544" width="32" height="32" fill="#035fc3"/>
<rect x="1056" y="544" width="32" height="32" fill="#035fc3"/>
<rect x="-64" y="576" width="32" height="32" fill="#43d5f6"/>
<rect x="-32" y="576" width="32" height="32" fill="#43d5f6"/>
<rect x="0" y="576" width="32" height="32" fill="#4ad9f7"/>
<rect x="32" y="576" width="32" height="32" fill="#56def7"/>
<rect x="64" y="576" width="32" height="32" fill="#60e2f7"/>
<rect x="96" y="576" width="32" height="32" fill="#67e4f7"/>
<rect x="128" y="576" width="32" height="32" fill="#6be4f7"/>
<rect x="160" y="576" width="32" height="32" fill="#6ae3f7"/>
<rect x="192" y="576" width="32" height="32" fill="#66e0f7"/>
<rect x="224" y="576" width="32" height="32" fill="#5edcf8"/>
<rect x="256" y="576" width="32" height="32" fill="#57d8f8"/>
<rect x="288" y="576" width="32" height="32" fill="#50d3f8"/>
<rect x="320" y="576" width="32" height="32" fill="#4acff7"/>
<rect x="352" y="576" width="32" height="32" fill="#44caf7"/>
<rect x="384" y="576" width="32" height="32" fill="#3dc4f7"/>
<rect x="416" y="576" width="32" height="32" fill="#36bef7"/>
<rect x="448" y="576" width="32" height="32" fill="#2fb8f7"/>
<rect x="480" y="576" width="32" height="32" fill="#2ab2f7"/>
<rect x="512" y="576" width="32" height="32" fill="#25adf7"/>
<rect x="544" y="576" width="32" height="32" fill="#20a8f7"/>
<rect x="576" y="576" width="32" height="32" fill="#1ba3f7"/>
<rect x="608" y="576" width="32" height="32" fill="#169df6"/>
<rect x="640" y="576" width="32" height="32" fill="#1297f5"/>
<rect x="672" y="576" width="32" height="32" fill="#0e90f3"/>
<rect x="704" y="576" width="32" height="32" fill="#0a8af0"/>
<rect x="736" y="576" width="32" height="32" fill="#0885ed"/>
<rect x="768" y="576" width="32" height="32" fill="#0780e9"/>
<rect x="800" y="576" width="32" height="32" fill="#077ce5"/>
<rect x="832" y="576" width="32" height="32" fill="#0778e1"/>
<rect x="864" y="576" width="32" height="32" fill="#0774dc"/>
<rect x="896" y="576" width="32" height="32" fill="#076fd8"/>
<rect x="928" y="576" width="32" height="32" fill="#066ad2"/>
<rect x="960" y="576" width="32" height="32" fill="#0565cd"/>
<rect x="992" y="576" width="32" height="32" fill="#0361c6"/>
<rect x="1024" y="576" width="32" height="32" fill="#025fc3"/>
<rect x="1056" y="576" width="32" height="32" fill="#025fc3"/>
<rect x="-64" y="608" width="32" height="32" fill="#39d0f5"/>
<rect x="-32" y="608" width="32" height="32" fill="#39d0f5"/>
<rect x="0" y="608" width="32" height="32" fill="#41d4f5"/>
<rect x="32" y="608" width="32" height="32" fill="#4fdbf6"/>
<rect x="64" y="608" width="32" height="32" fill="#5be0f6"/>
<rect x="96" y="608" width="32" height="32" fill="#66e3f6"/>
<rect x="128" y="608" width="32" height="32" fill="#6de3f6"/>
<rect x="160" y="608" width="32" height="32" fill="#6de2f6"/>
<rect x="192" y="608" width="32" height="32" fill="#66dff7"/>
<rect x="224" y="608" width="32" height="32" fill="#5cdaf8"/>
<rect x="256" y="608" width="32" height="32" fill="#52d5f8"/>
<rect x="288" y="608" width="32" height="32" fill="#4ad0f8"/>
<rect x="320" y="608" width="32" height="32" fill="#44ccf8"/>
<rect x="352" y="608" width="32" height="32" fill="#3ec7f8"/>
<rect x="384" y="608" width="32" height="32" fill="#37c1f7"/>
<rect x="416" y="608" width="32" height="32" fill="#30baf7"/>
<rect x="448" y="608" width="32" height="32" fill="#2bb4f7"/>
<rect x="480" y="608" width="32" height="32" fill="#26aff8"/>
<rect x="512" y="608" width="32" height="32" fill="#21aaf8"/>
<rect x="544" y="608" width="32" height="32" fill="#1da6f8"/>
<rect x="576" y="608" width="32" height="32" fill="#19a1f8"/>
<rect x="608" y="608" width="32" height="32" fill="#149bf7"/>
<rect x="640" y="608" width="32" height="32" fill="#1095f5"/>
<rect x="672" y="608" width="32" height="32" fill="#0c8ff3"/>
<rect x="704" y="608" width="32" height="32" fill="#0989f1"/>
<rect x="736" y="608" width="32" height="32" fill="#0684ed"/>
<rect x="768" y="608" width="32" height="32" fill="#0680e9"/>
<rect x="800" y="608" width="32" height="32" fill="#067ce5"/>
<rect x="832" y="608" width="32" height="32" fill="#0779e1"/>
<rect x="864" y="608" width="32" height="32" fill="#0874dd"/>
<rect x="896" y="608" width="32" height="32" fill="#076fd8"/>
<rect x="928" y="608" width="32" height="32" fill="#066ad3"/>
<rect x="960" y="608" width="32" height="32" fill="#0465cd"/>
<rect x="992" y="608" width="32" height="32" fill="#0161c6"/>
<rect x="1024" y="608" width="32" height="32" fill="#005fc3"/>
<rect x="1056" y="608" width="32" height="32" fill="#005fc3"/>
<rect x="-64" y="640" width="32" height="32" fill="#28c8f4"/>
<rect x="-32" y="640" width="32" height="32" fill="#28c8f4"/>
<rect x="0" y="640" width="32" height="32" fill="#30ccf4"/>
<rect x="32" y="640" width="32" height="32" fill="#42d5f5"/>
<rect x="64" y="640" width="32" height="32" fill="#53dbf5"/>
<rect x="96" y="640" width="32" height="32" fill="#63dff5"/>
<rect x="128" y="640" width="32" height="32" fill="#6de0f5"/>
<rect x="160" y="640" width="32" height="32" fill="#6edff5"/>
<rect x="192" y="640" width="32" height="32" fill="#66dbf6"/>
<rect x="224" y="640" width="32" height="32" fill="#58d6f7"/>
<rect x="256" y="640" width="32" height="32" fill="#4bd0f8"/>
<rect x="288" y="640" width="32" height="32" fill="#40cbf8"/>
<rect x="320" y="640" width="32" height="32" fill="#39c6f8"/>
<rect x="352" y="640" width="32" height="32" fill="#34c1f8"/>
<rect x="384" y="640" width="32" height="32" fill="#2fbbf8"/>
<rect x="416" y="640" width="32" height="32" fill="#29b6f8"/>
<rect x="448" y="640" width="32" height="32" fill="#25b0f8"/>
<rect x="480" y="640" width="32" height="32" fill="#21abf8"/>
<rect x="512" y="640" width="32" height="32" fill="#1ea7f8"/>
<rect x="544" y="640" width="32" height="32" fill="#1aa3f8"/>
<rect x="576" y="640" width="32" height="32" fill="#169ef8"/>
<rect x="608" y="640" width="32" height="32" fill="#1299f7"/>
<rect x="640" y="640" width="32" height="32" fill="#0e93f6"/>
<rect x="672" y="640" width="32" height="32" fill="#0b8df4"/>
<rect x="704" y="640" width="32" height="32" fill="#0888f1"/>
<rect x="736" y="640" width="32" height="32" fill="#0683ee"/>
<rect x="768" y="640" width="32" height="32" fill="#057fea"/>
<rect x="800" y="640" width="32" height="32" fill="#067ce5"/>
<rect x="832" y="640" width="32" height="32" fill="#0779e1"/>
<rect x="864" y="640" width="32" height="32" fill="#0874dd"/>
<rect x="896" y="640" width="32" height="32" fill="#076fda"/>
<rect x="928" y="640" width="32" height="32" fill="#066ad4"/>
<rect x="960" y="640" width="32" height="32" fill="#0365cd"/>
<rect x="992" y="640" width="32" height="32" fill="#0061c6"/>
<rect x="1024" y="640" width="32" height="32" fill="#005fc3"/>
<rect x="1056" y="640" width="32" height="32" fill="#005fc3"/>
<rect x="-64" y="672" width="32" height="32" fill="#15bef4"/>
<rect x="-32" y="672" width="32" height="32" fill="#15bef4"/>
<rect x="0" y="672" width="32" height="32" fill="#1ec3f4"/>
<rect x="32" y="672" width="32" height="32" fill="#32cef4"/>
<rect x="64" y="672" width="32" height="32" fill="#48d6f4"/>
<rect x="96" y="672" width="32" height="32" fill="#5cdbf4"/>
<rect x="128" y="672" width="32" height="32" fill="#6adcf4"/>
<rect x="160" y="672" width="32" height="32" fill="#6edbf4"/>
<rect x="192" y="672" width="32" height="32" fill="#64d6f5"/>
<rect x="224" y="672" width="32" height="32" fill="#53d0f7"/>
<rect x="256" y="672" width="32" height="32" fill="#42caf7"/>
<rect x="288" y="672" width="32" height="32" fill="#35c3f8"/>
<rect x="320" y="672" width="32" height="32" fill="#2ebff8"/>
<rect x="352" y="672" width="32" height="32" fill="#2abaf8"/>
<rect x="384" y="672" width="32" height="32" fill="#26b6f8"/>
<rect x="416" y="672" width="32" height="32" fill="#22b0f8"/>
<rect x="448" y="672" width="32" height="32" fill="#1facf8"/>
<rect x="480" y="672" width="32" height="32" fill="#1da7f8"/>
<rect x="512" y="672" width="32" height="32" fill="#1aa3f8"/>
<rect x="544" y="672" width="32" height="32" fill="#179ff8"/>
<rect x="576" y="672" width="32" height="32" fill="#139af8"/>
<rect x="608" y="672" width="32" height="32" fill="#1095f7"/>
<rect x="640" y="672" width="32" height="32" fill="#0c90f6"/>
<rect x="672" y="672" width="32" height="32" fill="#098bf4"/>
<rect x="704" y="672" width="32" height="32" fill="#0786f2"/>
<rect x="736" y="672" width="32" height="32" fill="#0582ee"/>
<rect x="768" y="672" width="32" height="32" fill="#057eea"/>
<rect x="800" y="672" width="32" height="32" fill="#067be6"/>
<rect x="832" y="672" width="32" height="32" fill="#0778e2"/>
<rect x="864" y="672" width="32" height="32" fill="#0773df"/>
<rect x="896" y="672" width="32" height="32" fill="#076edb"/>
<rect x="928" y="672" width="32" height="32" fill="#0569d6"/>
<rect x="960" y="672" width="32" height="32" fill="#0264cf"/>
<rect x="992" y="672" width="32" height="32" fill="#0061c8"/>
<rect x="1024" y="672" width="32" height="32" fill="#005fc5"/>
<rect x="1056" y="672" width="32" height="32" fill="#005fc5"/>
<rect x="-64" y="704" width="32" height="32" fill="#06b7f3"/>
<rect x="-32" y="704" width="32" height="32" fill="#06b7f3"/>
<rect x="0" y="704" width="32" height="32" fill="#0fbbf3"/>
<rect x="32" y="704" width="32" height="32" fill="#25c6f3"/>
<rect x="64" y="704" width="32" height="32" fill="#3ccff3"/>
<rect x="96" y="704" width="32" height="32" fill="#51d4f3"/>
<rect x="128" y="704" width="32" height="32" fill="#62d6f3"/>
<rect x="160" y="704" width="32" height="32" fill="#66d4f4"/>
<rect x="192" y="704" width="32" height="32" fill="#5cd0f5"/>
<rect x="224" y="704" width="32" height="32" fill="#4ccaf6"/>
<rect x="256" y="704" width="32" height="32" fill="#3ac3f7"/>
<rect x="288" y="704" width="32" height="32" fill="#2cbdf7"/>
<rect x="320" y="704" width="32" height="32" fill="#25b8f8"/>
<rect x="352" y="704" width="32" height="32" fill="#21b4f8"/>
<rect x="384" y="704" width="32" height="32" fill="#1eb0f8"/>
<rect x="416" y="704" width="32" height="32" fill="#1cabf8"/>
<rect x="448" y="704" width="32" height="32" fill="#1aa7f8"/>
<rect x="480" y="704" width="32" height="32" fill="#18a2f8"/>
<rect x="512" y="704" width="32" height="32" fill="#159ef8"/>
<rect x="544" y="704" width="32" height="32" fill="#139bf8"/>
<rect x="576" y="704" width="32" height="32" fill="#1097f8"/>
<rect x="608" y="704" width="32" height="32" fill="#0d92f7"/>
<rect x="640" y="704" width="32" height="32" fill="#0a8df6"/>
<rect x="672" y="704" width="32" height="32" fill="#0888f4"/>
<rect x="704" y="704" width="32" height="32" fill="#0684f2"/>
<rect x="736" y="704" width="32" height="32" fill="#0580ef"/>
<rect x="768" y="704" width="32" height="32" fill="#047deb"/>
<rect x="800" y="704" width="32" height="32" fill="#0579e7"/>
<rect x="832" y="704" width="32" height="32" fill="#0576e3"/>
<rect x="864" y="704" width="32" height="32" fill="#0572e0"/>
<rect x="896" y="704" width="32" height="32" fill="#056ddc"/>
<rect x="928" y="704" width="32" height="32" fill="#0368d7"/>
<rect x="960" y="704" width="32" height="32" fill="#0164d0"/>
<rect x="992" y="704" width="32" height="32" fill="#0060ca"/>
<rect x="1024" y="704" width="32" height="32" fill="#005fc7"/>
<rect x="1056" y="704" width="32" height="32" fill="#005fc7"/>
<rect x="-64" y="736" width="32" height="32" fill="#00b2f4"/>
<rect x="-32" y="736" width="32" height="32" fill="#00b2f4"/>
<rect x="0" y="736" width="32" height="32" fill="#06b6f3"/>
<rect x="32" y="736" width="32" height="32" fill="#1abff3"/>
<rect x="64" y="736" width="32" height="32" fill="#30c7f3"/>
<rect x="96" y="736" width="32" height="32" fill="#43ccf3"/>
<rect x="128" y="736" width="32" height="32" fill="#52cdf3"/>
<rect x="160" y="736" width="32" height="32" fill="#56ccf3"/>
<rect x="192" y="736" width="32" height="32" fill="#50c9f4"/>
<rect x="224" y="736" width="32" height="32" fill="#43c3f5"/>
<rect x="256" y="736" width="32" height="32" fill="#34bdf6"/>
<rect x="288" y="736" width="32" height="32" fill="#27b7f7"/>
<rect x="320" y="736" width="32" height="32" fill="#1fb3f7"/>
<rect x="352" y="736" width="32" height="32" fill="#1baff8"/>
<rect x="384" y="736" width="32" height="32" fill="#18abf8"/>
<rect x="416" y="736" width="32" height="32" fill="#16a6f8"/>
<rect x="448" y="736" width="32" height="32" fill="#14a2f8"/>
<rect x="480" y="736" width="32" height="32" fill="#139ef8"/>
<rect x="512" y="736" width="32" height="32" fill="#119bf8"/>
<rect x="544" y="736" width="32" height="32" fill="#0f97f8"/>
<rect x="576" y="736" width="32" height="32" fill="#0c93f7"/>
<rect x="608" y="736" width="32" height="32" fill="#0a8ff7"/>
<rect x="640" y="736" width="32" height="32" fill="#088af6"/>
<rect x="672" y="736" width="32" height="32" fill="#0686f4"/>
<rect x="704" y="736" width="32" height="32" fill="#0482f2"/>
<rect x="736" y="736" width="32" height="32" fill="#037eef"/>
<rect x="768" y="736" width="32" height="32" fill="#037bec"/>
<rect x="800" y="736" width="32" height="32" fill="#0378e8"/>
<rect x="832" y="736" width="32" height="32" fill="#0374e4"/>
<rect x="864" y="736" width="32" height="32" fill="#0370e1"/>
<rect x="896" y="736" width="32" height="32" fill="#036cdd"/>
<rect x="928" y="736" width="32" height="32" fill="#0167d8"/>
<rect x="960" y="736" width="32" height="32" fill="#0063d2"/>
<rect x="992" y="736" width="32" height="32" fill="#0060cc"/>
<rect x="1024" y="736" width="32" height="32" fill="#005ec9"/>
<rect x="1056" y="736" width="32" height="32" fill="#005ec9"/>
<rect x="-64" y="768" width="32" height="32" fill="#00b0f4"/>
<rect x="-32" y="768" width="32" height="32" fill="#00b0f4"/>
<rect x="0" y="768" width="32" height="32" fill="#03b4f4"/>
<rect x="32" y="768" width="32" height="32" fill="#16bcf3"/>
<rect x="64" y="768" width="32" height="32" fill="#2ac3f3"/>
<rect x="96" y="768" width="32" height="32" fill="#3cc8f3"/>
<rect x="128" y="768" width="32" height="32" fill="#4acaf3"/>
<rect x="160" y="768" width="32" height="32" fill="#4ec9f4"/>
<rect x="192" y="768" width="32" height="32" fill="#49c5f4"/>
<rect x="224" y="768" width="32" height="32" fill="#3ec0f5"/>
<rect x="256" y="768" width="32" height="32" fill="#30bbf6"/>
<rect x="288" y="768" width="32" height="32" fill="#25b5f7"/>
<rect x="320" y="768" width="32" height="32" fill="#1db1f7"/>
<rect x="352" y="768" width="32" height="32" fill="#19acf8"/>
<rect x="384" y="768" width="32" height="32" fill="#16a8f8"/>
<rect x="416" y="768" width="32" height="32" fill="#14a4f8"/>
<rect x="448" y="768" width="32" height="32" fill="#12a0f8"/>
<rect x="480" y="768" width="32" height="32" fill="#109cf8"/>
<rect x="512" y="768" width="32" height="32" fill="#0f99f8"/>
<rect x="544" y="768" width="32" height="32" fill="#0d95f8"/>
<rect x="576" y="768" width="32" height="32" fill="#0a91f7"/>
<rect x="608" y="768" width="32" height="32" fill="#088df7"/>
<rect x="640" y="768" width="32" height="32" fill="#0689f6"/>
<rect x="672" y="768" width="32" height="32" fill="#0585f4"/>
<rect x="704" y="768" width="32" height="32" fill="#0381f2"/>
<rect x="736" y="768" width="32" height="32" fill="#027eef"/>
<rect x="768" y="768" width="32" height="32" fill="#027aec"/>
<rect x="800" y="768" width="32" height="32" fill="#0277e8"/>
<rect x="832" y="768" width="32" height="32" fill="#0273e5"/>
<rect x="864" y="768" width="32" height="32" fill="#026fe1"/>
<rect x="896" y="768" width="32" height="32" fill="#016bdd"/>
<rect x="928" y="768" width="32" height="32" fill="#0067d8"/>
<rect x="960" y="768" width="32" height="32" fill="#0063d2"/>
<rect x="992" y="768" width="32" height="32" fill="#0060cc"/>
<rect x="1024" y="768" width="32" height="32" fill="#005eca"/>
<rect x="1056" y="768" width="32" height="32" fill="#005eca"/>
<rect x="-64" y="800" width="32" height="32" fill="#00b0f4"/>
<rect x="-32" y="800" width="32" height="32" fill="#00b0f4"/>
<rect x="0" y="800" width="32" height="32" fill="#03b4f4"/>
<rect x="32" y="800" width="32" height="32" fill="#16bcf3"/>
<rect x="64" y="800" width="32" height="32" fill="#2ac3f3"/>
<rect x="96" y="800" width="32" height="32" fill="#3cc8f3"/>
<rect x="128" y="800" width="32" height="32" fill="#4acaf3"/>
<rect x="160" y="800" width="32" height="32" fill="#4ec9f4"/>
<rect x="192" y="800" width="32" height="32" fill="#49c5f4"/>
<rect x="224" y="800" width="32" height="32" fill="#3ec0f5"/>
<rect x="256" y="800" width="32" height="32" fill="#30bbf6"/>
<rect x="288" y="800" width="32" height="32" fill="#25b5f7"/>
<rect x="320" y="800" width="32" height="32" fill="#1db1f7"/>
<rect x="352" y="800" width="32" height="32" fill="#19acf8"/>
<rect x="384" y="800" width="32" height="32" fill="#16a8f8"/>
<rect x="416" y="800" width="32" height="32" fill="#14a4f8"/>
<rect x="448" y="800" width="32" height="32" fill="#12a0f8"/>
<rect x="480" y="800" width="32" height="32" fill="#109cf8"/>
<rect x="512" y="800" width="32" height="32" fill="#0f99f8"/>
<rect x="544" y="800" width="32" height="32" fill="#0d95f8"/>
<rect x="576" y="800" width="32" height="32" fill="#0a91f7"/>
<rect x="608" y="800" width="32" height="32" fill="#088df7"/>
<rect x="640" y="800" width="32" height="32" fill="#0689f6"/>
<rect x="672" y="800" width="32" height="32" fill="#0585f4"/>
<rect x="704" y="800" width="32" height="32" fill="#0381f2"/>
<rect x="736" y="800" width="32" height="32" fill="#027eef"/>
<rect x="768" y="800" width="32" height="32" fill="#027aec"/>
<rect x="800" y="800" width="32" height="32" fill="#0277e8"/>
<rect x="832" y="800" width="32" height="32" fill="#0273e5"/>
<rect x="864" y="800" width="32" height="32" fill="#026fe1"/>
<rect x="896" y="800" width="32" height="32" fill="#016bdd"/>
<rect x="928" y="800" width="32" height="32" fill="#0067d8"/>
<rect x="960" y="800" width="32" height="32" fill="#0063d2"/>
<rect x="992" y="800" width="32" height="32" fill="#0060cc"/>
<rect x="1024" y="800" width="32" height="32" fill="#005eca"/>
<rect x="1056" y="800" width="32" height="32" fill="#005eca"/>
</g>
<path d="M1015 -10 Q975 40 925 110" stroke="#7aa8e0" stroke-width="30" fill="none" opacity=".06" filter="url(#bl8)"/>
<path d="M1030 38 Q990 62 950 95" stroke="#a8d0f4" stroke-width="1" fill="none" opacity=".1"/>
<path d="M560 690 Q830 605 1060 545" stroke="#9ee4ff" stroke-width="8" fill="none" opacity=".22" filter="url(#bl8)"/>

<path d="M330 745 Q 560 690 820 665" stroke="#a8e8ff" stroke-width="10" fill="none" opacity=".18" filter="url(#bl8)"/>
<path d="M349 728 Q 480 685 611 677.5" stroke="#fff" stroke-width="1.2" fill="none" opacity=".75"/>
<path d="M558.6 681.9 Q584.8 679 611 677.5 Q 720 676 777 730" stroke="#fff" stroke-width="5" fill="none" opacity=".5" filter="url(#bl2)"/>
<path d="M611 677.5 Q 720 676 777 730" stroke="#fff" stroke-width="2.6" fill="none"/>
<path d="M558.6 681.9 Q584.8 679 611 677.5" stroke="#fff" stroke-width="1.8" fill="none" opacity=".8"/>
<path d="M0 719 Q62 640 170 598" stroke="#a8e868" stroke-width="1.7" fill="none"/>
<path d="M0 676 Q60 652 170 612" stroke="#fff" stroke-width="1.2" fill="none" opacity=".55"/>
<path d="M18 665 Q50 630 95 603" stroke="#fff" stroke-width="1" fill="none" opacity=".45"/>
<path d="M35 650 Q55 625 78 605" stroke="#fff" stroke-width="1" fill="none" opacity=".35"/>
<path d="M14 728 Q20 712 26 698" stroke="#fff" stroke-width="1" fill="none" opacity=".3"/>
</svg>
<!-- computer icon -->
<svg width="70" height="50" style="left:0;top:0">
<defs>
<linearGradient id="scr" x1="0" y1="0" x2="1" y2="0.3"><stop offset="0" stop-color="#2838d8"/><stop offset=".4" stop-color="#0818c0"/><stop offset=".55" stop-color="#8ca4f4"/><stop offset="1" stop-color="#3c5ce0"/></linearGradient>
<linearGradient id="twr" x1="0" y1="0" x2="1" y2="0"><stop offset="0" stop-color="#c8c8c8"/><stop offset=".5" stop-color="#f4f4f4"/><stop offset="1" stop-color="#b8b8b8"/></linearGradient>
</defs>
<path d="M16.5 21 L26 18.5 L28 44 L17 44 Z" fill="url(#twr)"/>
<rect x="17.5" y="24" width="2.5" height="3" fill="#30d030"/>
<ellipse cx="44" cy="44" rx="11" ry="2.5" fill="#d0d0d0"/>
<path d="M28 12 L61 15.5 L59 43 L26.5 36.5 Z" fill="#dedbd0" stroke="#a8a8a0" stroke-width=".6"/>
<path d="M30 14.5 L58.5 17.5 L57 40 L28.5 34.5 Z" fill="url(#scr)"/>
<path d="M32 20 L35 18 L33 33 L30 33 Z" fill="#fff" opacity=".25"/>
</svg>
<!-- 360 browser icon -->
<svg width="60" height="50" style="left:88px;top:0">
<defs><radialGradient id="g360" cx=".45" cy=".3" r=".75"><stop offset="0" stop-color="#9ce850"/><stop offset="1" stop-color="#48b820"/></radialGradient></defs>
<circle cx="29.5" cy="30.5" r="20.6" fill="#fff"/>
<circle cx="29.5" cy="30.5" r="18.3" fill="url(#g360)"/>
<path d="M21.9 27.1 Q22.5 20.4 29 20.4 Q35.5 20.4 36.2 27.1 Z" fill="#fff"/>
<path d="M21.1 33.2 L47.6 33.2 L47.6 36.5 L36 36.5 Q34 40.7 28.5 40.7 Q22 40.5 21.1 33.2 Z" fill="#fff"/>
<path d="M11 35.7 Q22 20 37.7 12.5" stroke="#fff" stroke-width="1.3" fill="none"/>
<path d="M33 11.5 Q41 7.5 46 8 Q50 10 50.5 15 Q46 10.5 38 12.5 Z" fill="#5cc828"/>
<rect x="5.5" y="39" width="15" height="9" fill="#e8f0fa" stroke="#555" stroke-width=".8"/>
<path d="M9 44 L13 41 L19 41 L19 48 L9 48 Z" fill="#2a5aa8"/>
</svg>
<!-- S app icon -->
<svg width="60" height="50" style="left:165px;top:0">
<defs>
<linearGradient id="sy" x1="0" y1="0" x2="1" y2="0"><stop offset="0" stop-color="#f4b838"/><stop offset="1" stop-color="#8cb040"/></linearGradient>
<linearGradient id="sg" x1="0" y1="1" x2="1" y2="0"><stop offset="0" stop-color="#48e888"/><stop offset="1" stop-color="#18a058"/></linearGradient>
<linearGradient id="st" x1="0" y1="0" x2="1" y2="0"><stop offset="0" stop-color="#30e8e0"/><stop offset="1" stop-color="#1058a8"/></linearGradient>
</defs>
<rect x="6.2" y="6.8" width="48" height="48" rx="8.5" fill="#fff"/>
<path d="M25 14.3 L44.3 14 L40.3 26.5 L32 29 L23 31 Q21 21 25 14.3 Z" fill="url(#sg)"/>
<ellipse cx="40.5" cy="31" rx="5.2" ry="4.6" fill="#2cc878"/>
<path d="M14 24.5 Q14.5 15 26 14.6 L30.8 14.2 Q24 20 22.8 30.8 Q14 31.5 14 24.5 Z" fill="url(#sy)"/>
<path d="M22.5 31.5 Q25.5 27.5 31 28.3 L35.5 25.8 L37.5 28.5 L42 27.8 L42.3 32.5 L38 33.8 Q33 37 28 36.3 Q23 35.5 22.5 31.5 Z" fill="#fff"/>
<path d="M16.5 46 Q19.5 36.5 29 35.8 L37.5 35.2 Q43.5 34.5 45.5 33.5 Q46.5 41 40 46 Z" fill="url(#st)"/>
<rect x="6.5" y="39" width="15" height="9" fill="#e8f0fa" stroke="#555" stroke-width=".8"/>
<path d="M10 44 L14 41 L20 41 L20 48 L10 48 Z" fill="#2a5aa8"/>
</svg>
<!-- partially hidden left icons -->
<div class="a" style="left:15px;top:216px;width:8px;height:31px;background:#f4f6f8;border-radius:3px 0 0 0"></div>
<div class="a" style="left:15px;top:247px;width:8px;height:15px;background:#e8eef6;border:1px solid #777;border-right:0"></div>
<div class="dl" style="left:15px;top:268px">百</div>
<div class="a" style="left:15px;top:326px;width:10px;height:28px;border:3px solid #d8dcdf;border-right:0;border-radius:14px 0 0 14px;background:#2a5ab0"></div>
<div class="a" style="left:15px;top:351px;width:8px;height:15px;background:#e8eef6;border:1px solid #777;border-right:0"></div>
<div class="dl" style="left:14px;top:371px">驱</div>
<div class="a" style="left:15px;top:455px;width:8px;height:15px;background:#e8eef6;border:1px solid #777;border-right:0"></div>
<div class="dl" style="left:15px;top:477px">股</div>
<div class="a" style="left:19px;top:535px;width:4px;height:20px;background:#eef2f6;border:1px solid #6a8ae8;border-right:0;border-radius:3px 0 0 3px"></div>
<div class="dl" style="left:7px;top:579px">装</div>
<div class="dl" style="left:13px;top:596px">双击打开</div>
<!-- folder icon -->
<svg width="60" height="60" style="left:10px;top:625px">
<defs><linearGradient id="fy" x1="0" y1="0" x2="1" y2="0"><stop offset="0" stop-color="#fae6a0"/><stop offset="1" stop-color="#e8c868"/></linearGradient>
<linearGradient id="fp" x1="0" y1="0" x2="1" y2="0"><stop offset="0" stop-color="#f4f2ee"/><stop offset="1" stop-color="#d8d4cc"/></linearGradient></defs>
<path d="M9.4 6.5 L36 11 L36.5 15 L18 14 L18 50 L17.5 53.5 L9.8 46 Z" fill="url(#fy)" stroke="#d8b860" stroke-width=".5"/>
<path d="M29 16 L41.5 17.5 L42 50.5 L30 49 Z" fill="#fff" stroke="#ddd" stroke-width=".4"/>
<path d="M29 20 L37.5 22.5 L41 30 L37.5 37 L29 37 Z" fill="#303438"/>
<path d="M31 24.5 L34 25.5 L33.5 31 L31 30.5 Z" fill="#30c8e0"/>
<path d="M29.5 38 L40.5 39.5 L40.5 46 L29.5 45 Z" fill="#b8bcc4"/>
<path d="M29.5 41 L40.5 42 L40.5 43.5 L29.5 42.5 Z" fill="#702020"/>
<path d="M18.5 14 L28.5 18 L29 55 L18.5 50 Z" fill="url(#fp)" stroke="#c8c4bc" stroke-width=".4"/>
</svg>
<div class="dl" style="left:13px;top:683px">激活.驱动</div>
<!-- kugou icon -->
<svg width="50" height="50" style="left:93px;top:631px">
<rect x="0" y="0" width="48" height="48" rx="10" fill="#1f86f6"/>
<circle cx="24.3" cy="24" r="18.5" fill="none" stroke="#fff" stroke-width="3"/>
<path d="M17 13 L22.5 13 L20.8 22 L29 13 L35.5 13 L26 23.5 L32.5 35 L26 35 L21.5 26 L19 28.5 L17.8 35 L12.5 35 Z" fill="#fff"/>
<rect x="0.5" y="32.5" width="15" height="15" fill="#dce8f6" stroke="#6a6a6a" stroke-width="1"/>
<path d="M4 45 Q5 38 11 37.5 L10 35 L14 39 L10.5 42.5 L10.5 40 Q7 40.5 4 45 Z" fill="#1a4a98"/>
</svg>
<div class="dl" style="left:93px;top:683px">酷狗音乐</div>
<!-- window -->
<div id="win" class="a"></div>
<div class="a tb" style="left:715px"><div class="a" style="left:9px;top:8px;width:12px;height:5px;background:#f4f4f4;border:1px solid #3a4656;border-radius:1px"></div></div>
<div class="a tb" style="left:748px"><div class="a" style="left:9px;top:3px;width:11px;height:9px;background:#f4f4f4;border:1px solid #3a4656;border-radius:1px"><div class="a" style="left:2px;top:2px;width:5px;height:3px;background:#7a94b8;border:0"></div></div></div>
<div class="a tb" style="left:781px;border-color:#5b2620;background:linear-gradient(180deg,#eab0a2 0,#d98670 45%,#c4442a 50%,#d0603e 100%)">
<svg width="31" height="17" style="left:-1px;top:-1px"><path d="M11 4 L20 13 M20 4 L11 13" stroke="#3a3a3a" stroke-width="4.2"/><path d="M11 4 L20 13 M20 4 L11 13" stroke="#fff" stroke-width="2.6"/></svg></div>

<!-- nav buttons -->
<svg width="72" height="30" style="left:28px;top:76px">
<defs>
<linearGradient id="nb" x1="0" y1="0" x2="0" y2="1"><stop offset="0" stop-color="#eef3f9"/><stop offset=".48" stop-color="#dbe5f0"/><stop offset=".52" stop-color="#c6d4e4"/><stop offset="1" stop-color="#bccce0"/></linearGradient>
<linearGradient id="nr" x1="0" y1="0" x2="0" y2="1"><stop offset="0" stop-color="#98a8bc"/><stop offset=".6" stop-color="#5a6a80"/><stop offset="1" stop-color="#2a3646"/></linearGradient>
</defs>
<path d="M17 2 Q24 1.5 30 4.5 Q32 5.5 33 5.5 Q34 5.5 36 4.5 Q42 1.5 48 2 Q61 3.5 61.5 15.5 Q61 27.5 48 28.5 Q42 29 36 26 Q34 25 33 25 Q32 25 30 26 Q24 29 17 28.5 Q3.5 27.5 3.5 15.5 Q3.5 3.5 17 2Z" fill="#a4b8d0" opacity=".85"/>
<circle cx="17.5" cy="15.3" r="11.7" fill="url(#nb)" stroke="url(#nr)" stroke-width="1.3"/>
<circle cx="45.5" cy="15.3" r="11.7" fill="url(#nb)" stroke="url(#nr)" stroke-width="1.3"/>
<path d="M10 15.5 L16.5 9 L16.5 12.8 L23.8 12.8 L23.8 18.2 L16.5 18.2 L16.5 22 Z" fill="#e6edf5" stroke="#b4c2d2" stroke-width=".6" stroke-linejoin="round"/>
<path d="M53 15.5 L46.5 9 L46.5 12.8 L39.2 12.8 L39.2 18.2 L46.5 18.2 L46.5 22 Z" fill="#e6edf5" stroke="#b4c2d2" stroke-width=".6" stroke-linejoin="round"/>
<path d="M61.5 13.2 L69.5 13.2 L65.5 18.5 Z" fill="#eef3f9" stroke="#8a9bb0" stroke-width=".7"/>
</svg>

<!-- address -->
<div class="a box" style="left:100px;top:79px;width:466px;height:23px"></div>
<div class="a" style="left:539px;top:80px;width:1px;height:21px;background:#8d99a8"></div>
<div class="a" style="left:526px;top:89px;width:0;height:0;border-left:4px solid transparent;border-right:4px solid transparent;border-top:4px solid #0a1250"></div>
<svg width="18" height="16" style="left:103px;top:82px">
<rect x="0.5" y="3" width="3" height="11" fill="#c8c8c8" stroke="#888" stroke-width=".5"/>
<rect x="1" y="6" width="2" height="1.5" fill="#3c3"/>
<rect x="4" y="1.5" width="13" height="10" fill="#e8e8e8" stroke="#999" stroke-width=".6"/>
<rect x="5.2" y="2.7" width="10.6" height="7.6" fill="#1a3cc8"/>
<path d="M7.5 6.5 L9.5 8.5 L13.5 4" stroke="#fff" stroke-width="1.4" fill="none"/>
<path d="M8 12 L13 12 L14 14 L7 14 Z" fill="#bbb"/>
</svg>
<div class="t s" style="left:143px;top:82px">控制面板</div>
<div class="t s" style="left:216px;top:82px">系统和安全</div>
<div class="t s" style="left:301px;top:82px">系统</div>
<div class="a" style="left:130px;top:86px;border-top:4px solid transparent;border-bottom:4px solid transparent;border-left:4px solid #000"></div>
<div class="a" style="left:202px;top:86px;border-top:4px solid transparent;border-bottom:4px solid transparent;border-left:4px solid #000"></div>
<div class="a" style="left:287px;top:86px;border-top:4px solid transparent;border-bottom:4px solid transparent;border-left:4px solid #000"></div>
<svg width="18" height="18" style="left:544px;top:82px">
<path d="M2 7 L6 2.5 L6 5 Q10 5 10.5 8 L7.5 8 Q7 6.5 6 6.5 L6 9.5 Z" fill="#3a7ad0"/>
<path d="M15.5 10 L11.5 14.5 L11.5 12 Q7.5 12 7 9 L10 9 Q10.5 10.5 11.5 10.5 L11.5 7.5 Z" fill="#1a5ab8"/>
</svg>
<!-- search -->
<div class="a box" style="left:571px;top:79px;width:242px;height:23px"></div>
<div class="t" style="left:581px;top:82px;color:#6d6d6d;font-style:italic">搜索控制面板</div>
<svg width="14" height="16" style="left:794px;top:83px">
<circle cx="8.5" cy="5.8" r="3.8" fill="none" stroke="#2a72c8" stroke-width="1.8"/>
<path d="M5.5 9 L1.5 13" stroke="#1a3c88" stroke-width="2.2" stroke-linecap="round"/>
</svg>

<!-- menu -->
<div id="menu" class="a"></div>
<div class="t s" style="left:40px;top:114px">文件(F)</div>
<div class="t s" style="left:94px;top:114px">编辑(E)</div>
<div class="t s" style="left:149px;top:114px">查看(V)</div>
<div class="t s" style="left:204px;top:114px">工具(T)</div>
<div class="t s" style="left:260px;top:114px">帮助(H)</div>

<div id="lp" class="a"></div>
<div id="ct" class="a"></div>
<div id="sb" class="a"></div>
<div class="a" style="left:803px;top:140px;border-left:4px solid transparent;border-right:4px solid transparent;border-bottom:4px solid #222"></div>
<div class="a" style="left:799px;top:274px;width:14px;height:304px;border:1px solid #9b9b9b;border-radius:2px;background:linear-gradient(90deg,#f6f6f6 0,#ececec 45%,#dcdcdc 55%,#d2d2d2 100%)"></div>
<div class="a" style="left:803px;top:422px;width:6px;height:1px;background:#555;box-shadow:0 2px 0 #555,0 4px 0 #555,0 6px 0 #555"></div>
<div class="a" style="left:803px;top:588px;border-left:4px solid transparent;border-right:4px solid transparent;border-top:4px solid #333"></div>

<!-- left pane -->
<div class="t s lk" style="left:59px;top:148px">控制面板主页</div>
<div class="t s lk" style="left:59px;top:184px">设备管理器</div>
<div class="t s lk" style="left:59px;top:209px">远程设置</div>
<div class="t s lk" style="left:59px;top:234px">系统保护</div>
<div class="t s lk" style="left:59px;top:259px">高级系统设置</div>
<svg width="12" height="90" style="left:41px;top:190px" opacity=".6">
<path d="M1 6 L9 5 L6 7 L9 7 M1 31 L9 30 L6 32 L9 32 M1 56 L9 55 L6 57 L9 57 M1 81 L9 80 L6 82 L9 82" stroke="#8a96a6" stroke-width=".9" fill="none"/>
</svg>
<div class="t s" style="left:59px;top:511px;color:#6d6d6d">另请参阅</div>
<div class="t s lk" style="left:59px;top:536px">操作中心</div>
<div class="t s lk" style="left:59px;top:561px;font-size:13px">Windows Update</div>

<!-- windows logo -->
<svg width="150" height="50" style="left:630px;top:133px">
<defs>
<radialGradient id="wl" cx="77" cy="28" r="62" gradientUnits="userSpaceOnUse"><stop offset="0" stop-color="#5cb4ca"/><stop offset=".35" stop-color="#4a9cc0"/><stop offset=".7" stop-color="#2e5e9c"/><stop offset="1" stop-color="#223e84"/></radialGradient>
<linearGradient id="wly" x1="0" y1="0" x2="0" y2="1"><stop offset="0" stop-color="#ffd820"/><stop offset="1" stop-color="#f09010"/></linearGradient>
<filter id="ws" x="-20%" y="-50%" width="140%" height="200%"><feGaussianBlur stdDeviation="2.5"/></filter>
<clipPath id="wc"><rect x="0" y="0" width="150" height="50"/></clipPath>
</defs>
<g clip-path="url(#wc)">
<circle cx="77" cy="-31" r="68" fill="#000" opacity=".25" filter="url(#ws)"/>
<circle cx="77" cy="-32" r="67" fill="url(#wl)"/>
<path d="M68 0 L105 0 L104 6 Q90 12 70 8 Z" fill="url(#wly)" stroke="#c8a020" stroke-width=".5"/>
</g>
<circle cx="122" cy="25" r="1.5" fill="#555"/>
</svg>

<!-- content -->
<div class="t s" style="left:253px;top:194px">系统</div>
<div class="hr" style="left:279px;top:203px;width:506px"></div>
<div class="t s" style="left:273px;top:221px">分级:</div>
<div class="t s bl" style="left:423px;top:221px">系统分级不可用</div>
<div class="t s" style="left:273px;top:245px">处理器:</div>
<div class="t s" style="left:423px;top:244px;font-size:12.8px">AMD Ryzen 7 5800X 8-Core Processor</div>
<div class="t s" style="left:711px;top:244px;font-size:12.3px">3.79 GHz</div>
<div class="t s" style="left:273px;top:269px">安装内存(RAM):</div>
<div class="t s" style="left:423px;top:268px;font-size:12px">4.00 GB</div>
<div class="t s" style="left:273px;top:293px">系统类型:</div>
<div class="t s" style="left:423px;top:293px;font-size:12px">64 位操作系统</div>
<div class="t s" style="left:273px;top:317px">笔和触摸:</div>
<div class="t s" style="left:423px;top:317px">没有可用于此显示器的笔或触控输入</div>

<div class="t s" style="left:253px;top:350px">计算机名称、域和工作组设置</div>
<div class="hr" style="left:411px;top:360px;width:374px"></div>
<div class="t s" style="left:273px;top:377px">计算机名:</div>
<div class="t s" style="left:423px;top:377px;font-size:12.4px">XTZJ-20220225BO</div>
<div class="t s" style="left:273px;top:402px">计算机全名:</div>
<div class="t s" style="left:423px;top:402px;font-size:12.4px">XTZJ-20220225BO</div>
<div class="t s" style="left:273px;top:427px">计算机描述:</div>
<div class="t s" style="left:273px;top:452px">工作组:</div>
<div class="t s" style="left:423px;top:452px;font-size:13px">WorkGroup</div>
<svg width="15" height="17" style="left:671px;top:375px">
<path d="M7.5 1 Q11 2.5 14 2.5 L14 8 Q14 13.5 7.5 16 Q1 13.5 1 8 L1 2.5 Q4 2.5 7.5 1 Z" fill="#9a9a9a"/>
<path d="M7.5 2.3 Q10.5 3.5 12.8 3.5 L12.8 8 L7.5 8 Z" fill="#f8d030"/>
<path d="M7.5 2.3 Q4.5 3.5 2.2 3.5 L2.2 8 L7.5 8 Z" fill="#3a8ae0"/>
<path d="M2.2 8 Q2.2 12.5 7.5 14.8 L7.5 8 Z" fill="#f8d030"/>
<path d="M12.8 8 Q12.8 12.5 7.5 14.8 L7.5 8 Z" fill="#3a8ae0"/>
</svg>
<div class="t s bl" style="left:686px;top:377px">更改设置</div>

<div class="t s" style="left:253px;top:487px;font-size:12.4px">Windows 激活</div>
<div class="hr" style="left:333px;top:497px;width:452px"></div>
<div class="t s" style="left:273px;top:514px;font-size:12.6px">Windows 已激活</div>
<div class="t s" style="left:273px;top:539px;font-size:12.8px">产品 ID: 00426-OEM-8992662-00173</div>

<!-- badge -->
<div class="a" style="left:683px;top:513px;width:100px;height:55px;border-radius:3px;background:linear-gradient(100deg,#3a84c4 0%,#2a68a8 35%,#1c4c8c 70%,#16397a 100%);box-shadow:inset 0 1px 0 rgba(255,255,255,.35)"></div>
<div class="t" style="left:688px;top:521px;color:#e8f0f8;font-size:6.5px;line-height:8px">使用</div>
<div class="t" style="left:705px;top:518px;color:#fff;font-size:10px;line-height:12px">微软<span style="font-size:4px;vertical-align:top">®</span> 软件</div>
<div class="t" style="left:687px;top:532px;color:#fff;font-size:17px;line-height:19px;font-weight:bold">正版授权</div>
<div class="t" style="left:694px;top:551px;color:#f0f4f8;font-size:9.5px;line-height:12px;letter-spacing:-.2px">安全 稳定 声誉</div>
<svg width="26" height="24" style="left:754px;top:515px">
<path d="M13.2 2.5 L15.5 9.5 L23 9.5 L17 14 L19.5 21.5 L13.2 17 L7 21.5 L9.5 14 L3.5 9.5 L11 9.5 Z" fill="none" stroke="#30c8f0" stroke-width="1.4" stroke-linejoin="miter"/>
<path d="M13.2 2.5 L11 9.5 L3.5 9.5" fill="none" stroke="#f89030" stroke-width="1.6"/>
<text x="22" y="20" font-size="3" fill="#cde">TM</text>
</svg>
<div class="t s bl" style="left:681px;top:571px">联机了解更多内容...</div>
<!-- widget -->
<svg width="70" height="70" style="left:882px;top:356px">
<defs><radialGradient id="wg" cx=".5" cy=".4" r=".6"><stop offset="0" stop-color="#f4f8fc"/><stop offset=".7" stop-color="#e6f0f4"/><stop offset="1" stop-color="#cfe8d8"/></radialGradient></defs>
<circle cx="35" cy="35" r="33" fill="#5a90d8" stroke="#c8dcf4" stroke-width="1.2"/>
<path d="M35 4 A31 31 0 0 1 65.5 29.5" stroke="#48d860" stroke-width="4" fill="none"/>
<circle cx="35" cy="35" r="28.5" fill="url(#wg)" stroke="#28c848" stroke-width="1.4"/>
</svg>
<div class="t" style="left:898px;top:370px;font-size:23px;line-height:26px;color:#4a4a4a;letter-spacing:-.5px">22</div>
<div class="t" style="left:924px;top:380px;font-size:12px;line-height:14px;color:#404040">%</div>
<svg width="8" height="10" style="left:897px;top:399px"><path d="M4 1 L7 4.5 L5 4.5 L5 9 L3 9 L3 4.5 L1 4.5 Z" fill="#3a8ae8"/></svg>
<div class="t" style="left:907px;top:397px;font-size:9.5px;line-height:14px;color:#404040">0.4K/s</div>

<!-- IME toolbar -->
<div class="a" style="left:869px;top:705px;width:155px;height:24px;background:#fff"></div>
<svg width="155" height="24" style="left:869px;top:705px">
<defs><linearGradient id="imeg" x1="0" y1="0" x2="0" y2="1"><stop offset="0" stop-color="#fff"/><stop offset="1" stop-color="#dce8fc"/></linearGradient></defs>
<rect x="6.7" y="4.7" width="15" height="15" rx="2" fill="url(#imeg)" stroke="#3a78f0" stroke-width="1.4"/>
<path d="M6.7 12.5 L14 19.7 L8.7 19.7 Q6.7 19.7 6.7 17.7 Z" fill="#3a78f0"/>
<path d="M13.8 11.8 L20.2 5.8" stroke="#3a78f0" stroke-width="1.2"/><circle cx="13.8" cy="11.8" r="1.9" fill="#3a78f0"/>
<rect x="34.8" y="8" width="12.6" height="6.2" fill="none" stroke="#3a78f0" stroke-width="1.9"/>
<path d="M41.1 4.8 L41.1 19" stroke="#3a78f0" stroke-width="1.9"/>
<circle cx="65.3" cy="12.3" r="6.7" fill="#3a78f0"/>
<circle cx="61.8" cy="8.6" r="6.4" fill="#fff"/>
<circle cx="87.1" cy="8.9" r="2.3" fill="none" stroke="#3a78f0" stroke-width="1.7"/>
<circle cx="93.6" cy="13.6" r="2.2" fill="#3a78f0"/>
<path d="M95.8 13.8 Q95.8 17.8 91.2 19.2 Q93.6 17 93.4 15 Z" fill="#3a78f0"/>
<circle cx="112.9" cy="9.4" r="3.3" fill="#94bcf8"/>
<path d="M105.8 18.7 Q106.5 13.7 112.9 13.7 Q119.3 13.7 120 18.7 Z" fill="#94bcf8"/>
<g stroke="#3a78f0" stroke-width="2.1">
<path d="M138.9 4.8 L138.9 19 M131.8 11.9 L146 11.9 M133.9 6.9 L143.9 16.9 M143.9 6.9 L133.9 16.9"/>
</g>
<circle cx="138.9" cy="11.9" r="4.6" fill="#3a78f0"/>
<circle cx="138.9" cy="11.9" r="2.6" fill="#fff"/>
</svg>

<!-- taskbar -->
<div id="tk" class="a"></div>
<!-- start orb -->
<svg width="45" height="40" style="left:5px;top:728px">
<defs>
<radialGradient id="so" cx="22" cy="38" r="30" gradientUnits="userSpaceOnUse"><stop offset="0" stop-color="#20e8ff"/><stop offset=".35" stop-color="#1a88c8"/><stop offset=".7" stop-color="#0a4a88"/><stop offset="1" stop-color="#0a2a58"/></radialGradient>
<linearGradient id="sh" x1="0" y1="0" x2="0" y2="1"><stop offset="0" stop-color="#e8f0f8" stop-opacity=".95"/><stop offset="1" stop-color="#8aa8c8" stop-opacity=".5"/></linearGradient>
</defs>
<circle cx="22.1" cy="20" r="18" fill="url(#so)" stroke="#d8e0ea" stroke-width=".9"/>
<circle cx="22.1" cy="20" r="17" fill="none" stroke="#0a3060" stroke-width="1"/>
<path d="M5.5 18 Q6 3 22.1 3 Q38 3 38.7 18 Q30 16 22 16.5 Q14 16 5.5 18 Z" fill="url(#sh)"/>
<path d="M13 9.5 Q18 8 23.7 9.8 L22 18.6 Q17 17.2 11.5 18.5 Z" fill="#f05820"/>
<path d="M24.7 12 Q29.5 13.5 34.2 11.5 L32.5 21 Q27.5 22.5 22.8 21 Z" fill="#8cc040"/>
<path d="M11 20.3 Q16 19 21.4 20.5 L19.8 28.5 Q15 27 10 28.5 Z" fill="#3aa0e8"/>
<path d="M22.3 21.5 Q27 23 32 21.5 L30.5 30 Q25.5 31.5 20.3 30 Z" fill="#fcc428"/>
</svg>
<!-- IE -->
<svg width="40" height="40" style="left:70px;top:728px">
<defs><radialGradient id="ie" cx="18" cy="20" r="15" gradientUnits="userSpaceOnUse"><stop offset="0" stop-color="#b8f8ff"/><stop offset=".6" stop-color="#60d0f8"/><stop offset="1" stop-color="#1890d8"/></radialGradient></defs>
<circle cx="20.6" cy="20.3" r="13.3" fill="url(#ie)" stroke="#1a6ab0" stroke-width=".8"/>
<ellipse cx="20.2" cy="14.8" rx="5.6" ry="2.8" fill="#8593a8" stroke="#1a6ab0" stroke-width=".8"/>
<path d="M14.3 21.6 L34.5 21.6 L34.5 27.6 L25 27.6 Q17 27.6 14.3 21.6 Z" fill="#8593a8" stroke="#1a6ab0" stroke-width=".8"/>
<path d="M6 33.5 Q2 28 12 15 Q22 4 29 4.5 Q33.5 5 32 10" stroke="#f8c818" stroke-width="2.6" fill="none" stroke-linecap="round"/>
</svg>
<!-- explorer -->
<svg width="40" height="40" style="left:130px;top:728px">
<path d="M7 8 L21 8 L22 11 L7 11 Z" fill="#f4dc90" stroke="#c8a858" stroke-width=".6"/>
<rect x="9" y="8.5" width="9" height="2.5" fill="#fff"/><rect x="9" y="8" width="3" height="2" fill="#20c020"/>
<path d="M15 10 L34 10 L35 14 L15 14 Z" fill="#f4dc90" stroke="#c8a858" stroke-width=".6"/>
<rect x="17" y="10.3" width="10" height="2.5" fill="#fff"/><rect x="17" y="10.3" width="3" height="2" fill="#d03020"/>
<path d="M23 12 L36 12 L36 16 L23 16 Z" fill="#f4dc90" stroke="#c8a858" stroke-width=".6"/>
<rect x="25" y="12.3" width="8" height="2.5" fill="#fff"/><rect x="25" y="12.3" width="3" height="2" fill="#2088e0"/>
<path d="M5.2 11.2 L36.7 14 L36.7 33.6 L5.2 33.6 Z" fill="#f2d888" stroke="#c8a858" stroke-width=".7"/>
<path d="M6.5 14.5 L35.5 16.5 L35.5 32 L6.5 32 Z" fill="#f8e4a0"/>
<path d="M9.5 35.5 L9.5 24 Q9.5 22.5 11.5 22.5 L31 22.5 Q33 22.5 33 24 L33 35.5 L27 35.5 L27 29 L15.5 29 L15.5 35.5 Z" fill="#90d4f4" stroke="#2a88c8" stroke-width="1"/>
</svg>
<!-- kugou -->
<svg width="33" height="33" style="left:196px;top:732px">
<rect x="0.5" y="0" width="32" height="32" rx="6" fill="#1f86f6"/>
<circle cx="16.5" cy="16" r="12" fill="none" stroke="#fff" stroke-width="2.4"/>
<path d="M11.5 9 L15 9 L14 14.5 L19.5 9 L23.5 9 L17.5 15.5 L21.5 23 L17.5 23 L14.7 17.5 L13.2 19 L12.4 23 L9 23 Z" fill="#fff"/>
</svg>
<!-- 360 -->
<svg width="32" height="32" style="left:259px;top:732px">
<circle cx="16" cy="16" r="14" fill="#fff"/>
<circle cx="16" cy="16" r="12" fill="url(#g360)"/>
<path d="M8 16 A8 8 0 0 1 24 16 L24 18 L11.5 18 A4.5 4.5 0 0 0 20.5 20.5 L24.5 20.5 A8.5 8.5 0 0 1 8 18 Z" fill="#fff"/>
<path d="M11.5 14 L20.5 14 A4.5 4 0 0 0 11.5 14 Z" fill="url(#g360)"/>
<path d="M4 24 Q14 6 29 4 Q31 5 30 7 Q18 8 4 24 Z" fill="#58c028"/>
</svg>
<!-- active task button -->
<div class="a" style="left:308px;top:729px;width:159px;height:39px;border:1px solid #3e4a5a;border-bottom:0;border-radius:3px 3px 0 0;background:linear-gradient(180deg,#d8dde3 0%,#c8cfd7 45%,#b4bdc8 100%);box-shadow:inset 0 0 0 1px rgba(255,255,255,.6)"></div>
<svg width="34" height="30" style="left:316px;top:733px">
<defs><linearGradient id="scr2" x1="0" y1="0" x2="1" y2="1"><stop offset="0" stop-color="#1a2ad0"/><stop offset=".5" stop-color="#2040d8"/><stop offset="1" stop-color="#8098f0"/></linearGradient></defs>
<path d="M2 9 L8 7 L9 26 L3 25 Z" fill="#d8d8d8" stroke="#999" stroke-width=".5"/>
<rect x="2.5" y="11" width="2" height="2" fill="#3c3"/>
<ellipse cx="19" cy="26" rx="8" ry="2.5" fill="#ccc"/>
<path d="M10 2 L32 5 L31 23 L9 20 Z" fill="#e8e4d8" stroke="#a8a498" stroke-width=".6"/>
<path d="M11.5 3.8 L30.5 6.3 L29.6 21.2 L10.7 18.6 Z" fill="url(#scr2)"/>
<path d="M15 11.5 L19 16 L27 7.5" stroke="#fff" stroke-width="2.2" fill="none"/>
</svg>
<div class="t" style="left:353px;top:739px;color:#fff;font-size:12.5px;text-shadow:0 0 2px rgba(0,0,0,.35)">控制面板\系统和...</div>

<!-- tray -->
<svg width="18" height="18" style="left:809px;top:737px">
<defs><linearGradient id="trg" x1="0" y1="0" x2="1" y2="1"><stop offset="0" stop-color="#fff"/><stop offset="1" stop-color="#c8dcf6"/></linearGradient></defs>
<rect x="1" y="1" width="15.5" height="15.5" rx="2" fill="url(#trg)" stroke="#2a5aa8" stroke-width="1.3"/>
<path d="M1.5 9.5 L8.5 16 L3 16 Q1.5 16 1.5 14.5 Z" fill="#6aa0e8"/>
<path d="M9 9.2 L14.5 3.3" stroke="#2a5aa8" stroke-width="1.1"/><circle cx="9" cy="9.2" r="1.5" fill="#2a5aa8"/>
</svg>
<div class="a" style="left:840px;top:747px;border-left:5px solid transparent;border-right:5px solid transparent;border-bottom:5px solid #eef2f6"></div>
<svg width="18" height="18" style="left:861px;top:740px">
<path d="M2 1 L2 16" stroke="#f0f0f0" stroke-width="1.6"/><path d="M2 1 L2 16" stroke="#333" stroke-width=".5" transform="translate(-1 0)"/>
<path d="M3 2 Q8 0 11 3 Q14 5 16 3 L16 10 Q13 12 10 9 Q7 7 3 9 Z" fill="#f8f8f8" stroke="#888" stroke-width=".5"/>
<circle cx="12" cy="12.5" r="4.2" fill="#e02828" stroke="#fff" stroke-width=".8"/>
<path d="M10.2 10.7 L13.8 14.3 M13.8 10.7 L10.2 14.3" stroke="#fff" stroke-width="1.3"/>
</svg>
<svg width="18" height="18" style="left:885px;top:740px">
<rect x="5" y="3" width="11" height="9" fill="#5a6878" stroke="#eee" stroke-width="1.2"/>
<path d="M8 15 L13 15" stroke="#eee" stroke-width="1.5"/><path d="M10.5 12 L10.5 15" stroke="#eee" stroke-width="1.2"/>
<path d="M2 1 L2 5 L5 5 L5 1 M3.5 5 L3.5 16" stroke="#f0f0f0" stroke-width="1.3" fill="none"/>
</svg>
<svg width="18" height="18" style="left:909px;top:740px">
<path d="M1.5 6 L5 6 L10 1.5 L10 15.5 L5 11 L1.5 11 Z" fill="#f4f4f4" stroke="#666" stroke-width=".6"/>
<circle cx="11.5" cy="12.5" r="4.2" fill="#e02828" stroke="#fff" stroke-width=".8"/>
<path d="M9.7 10.7 L13.3 14.3 M13.3 10.7 L9.7 14.3" stroke="#fff" stroke-width="1.3"/>
</svg>
<div class="t" style="left:955px;top:730px;color:#fff;font-size:13.5px;line-height:18px">11:11</div>
<div class="t" style="left:942px;top:748px;color:#fff;font-size:13.5px;line-height:18px">2022/2/25</div>
<div class="a" style="left:1010px;top:729px;width:14px;height:39px;border:1px solid #4a5566;border-right:0;background:linear-gradient(90deg,#a8b4c4,#7a889c)"></div>
<!-- cursor -->
<svg width="20" height="22" style="left:636px;top:291px">
<path d="M2.5 2.5 L2.5 18 L6.3 14.5 L9.3 20 L11.5 19 L8.8 13.8 L13.5 13.8 Z" fill="#fff" stroke="#111" stroke-width="1" stroke-linejoin="miter"/>
</svg>
</body></html>
